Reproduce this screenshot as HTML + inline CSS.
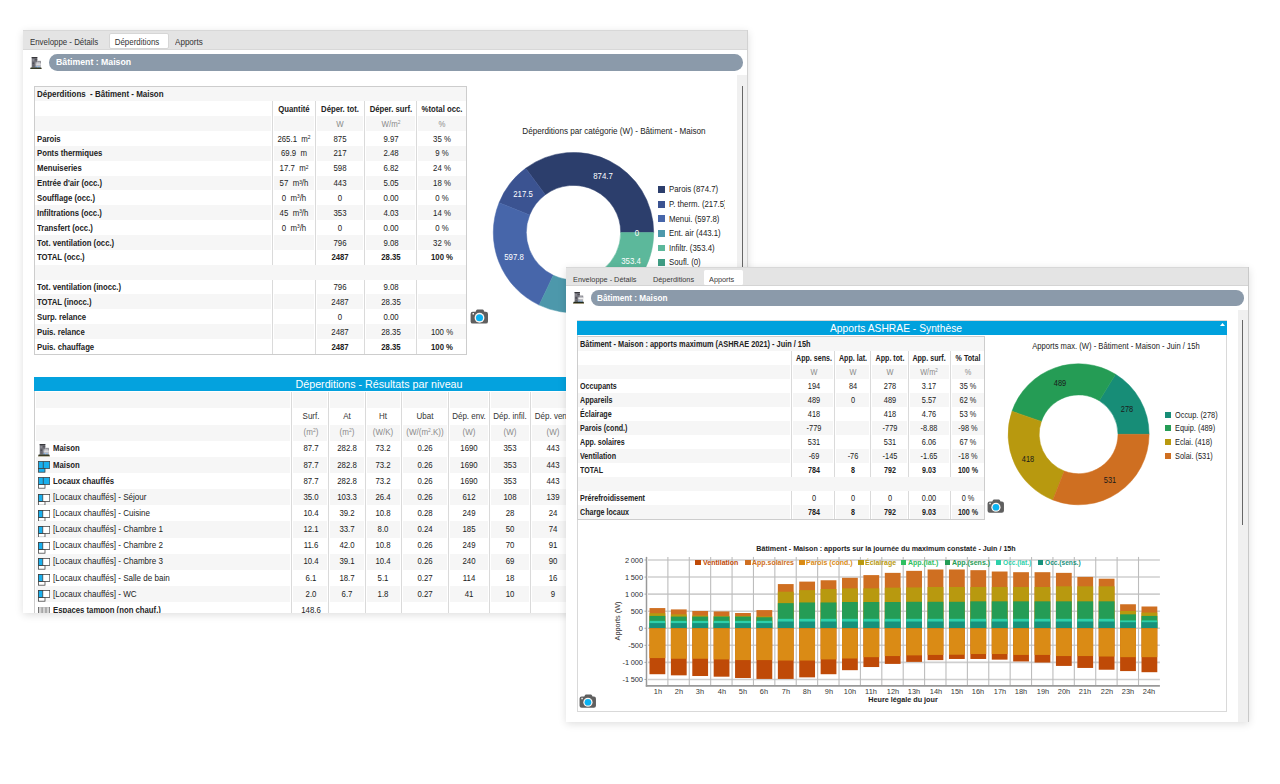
<!DOCTYPE html>
<html lang="fr"><head><meta charset="utf-8"><title>Déperditions / Apports</title>
<style>
html,body{margin:0;padding:0;background:#fff}
body{width:1280px;height:784px;position:relative;overflow:hidden;font-family:"Liberation Sans",sans-serif}
.win{position:absolute;background:#fff;overflow:hidden}
.win div,.win span,.win svg{position:absolute;display:block}
.win span{white-space:nowrap}
sup{font-size:62%;line-height:0;vertical-align:baseline;position:relative;top:-0.5em}
</style></head>
<body>
<div class="win" style="left:23.00px;top:30.00px;width:725.00px;height:583.00px;box-shadow:0 2px 8px rgba(0,0,0,0.13)">
<div style="left:0.00px;top:0.00px;width:725.00px;height:19.90px;background:#e4e4e4;border-bottom:1.3px solid #d8d8d8;border-top:1px solid #d8d8d8;box-sizing:border-box;"></div>
<div style="left:86.40px;top:2.90px;width:59.50px;height:16.30px;background:#fff;border:1px solid #d6d6d6;border-radius:2px;box-sizing:border-box;"></div>
<span style="left:7.00px;top:5.80px;width:400px;text-align:left;font-size:8.6px;line-height:12px;color:#333;transform:scaleX(0.915);transform-origin:left center;">Enveloppe - Détails</span>
<span style="left:-85.70px;top:5.80px;width:400px;text-align:center;font-size:8.6px;line-height:12px;color:#333;transform:scaleX(0.925);transform-origin:center center;">Déperditions</span>
<span style="left:152.00px;top:5.80px;width:400px;text-align:left;font-size:8.6px;line-height:12px;color:#333;transform:scaleX(0.94);transform-origin:left center;">Apports</span>
<svg style="left:7.10px;top:26.50px" width="11.90" height="12.30" viewBox="0 0 11.9 12.3"><rect x="1.7" y="0" width="5.6" height="10.7" fill="#74747c"/><rect x="1.7" y="0" width="5.6" height="1.2" fill="#37373b"/><rect x="2.5" y="2.3" width="1.6" height="1.4" fill="#94949c"/><rect x="4.9" y="2.3" width="2.4" height="1" fill="#4a4a50"/><rect x="2.5" y="5.4" width="1.7" height="1.9" fill="#4e4e56"/><rect x="2.5" y="8.3" width="1.7" height="1.2" fill="#5c5c64"/><rect x="7.3" y="3.9" width="3.5" height="6.8" fill="#b0b0b6"/><rect x="7.3" y="3.9" width="3.5" height="0.9" fill="#909096"/><rect x="5.6" y="6.4" width="5.0" height="1.4" fill="#f0f0f0"/><rect x="10" y="4.8" width="0.8" height="1.5" fill="#6a6a70"/><rect x="5.6" y="5.3" width="5.0" height="1.1" fill="#c2c2c8"/><rect x="5.6" y="7.8" width="5.0" height="1.4" fill="#bcbcc2"/><rect x="5.5" y="9.2" width="1.5" height="1.4" fill="#8cbcf0"/><rect x="8" y="9.2" width="1.7" height="1.4" fill="#8cbcf0"/><path d="M0 12.3 L0.7 10.5 L11.2 10.5 L11.9 12.3 Z" fill="#222a1a"/><rect x="0" y="11.85" width="11.9" height="0.45" fill="#b09662"/></svg>
<div style="left:26.30px;top:24.30px;width:693.70px;height:16.50px;background:#8b9aaa;border-radius:8.3px;"></div>
<span style="left:32.60px;top:26.40px;width:400px;text-align:left;font-size:9.8px;line-height:12px;color:#fff;transform:scaleX(0.89);transform-origin:left center;font-weight:bold;">Bâtiment : Maison</span>
<div style="left:714.30px;top:45.20px;width:10.70px;height:537.80px;background:#f0f0f0;"></div>
<div style="left:724.20px;top:0.00px;width:0.80px;height:583.00px;background:#d2d2d2;"></div>
<div style="left:718.60px;top:56.00px;width:1.30px;height:527.00px;background:#666;"></div>
<div style="left:12.00px;top:56.40px;width:430.70px;height:14.86px;background:#f6f6f6;"></div>
<div style="left:12.00px;top:86.12px;width:430.70px;height:14.86px;background:#f6f6f6;"></div>
<div style="left:12.00px;top:115.84px;width:430.70px;height:14.86px;background:#f6f6f6;"></div>
<div style="left:12.00px;top:145.56px;width:430.70px;height:14.86px;background:#f6f6f6;"></div>
<div style="left:12.00px;top:175.28px;width:430.70px;height:14.86px;background:#f6f6f6;"></div>
<div style="left:12.00px;top:205.00px;width:430.70px;height:14.86px;background:#f6f6f6;"></div>
<div style="left:12.00px;top:234.72px;width:430.70px;height:14.86px;background:#f6f6f6;"></div>
<div style="left:12.00px;top:264.44px;width:430.70px;height:14.86px;background:#f6f6f6;"></div>
<div style="left:12.00px;top:294.16px;width:430.70px;height:14.86px;background:#f6f6f6;"></div>
<div style="left:248.10px;top:71.26px;width:3.00px;height:252.62px;background:#fff;"></div>
<div style="left:249.10px;top:71.26px;width:1.00px;height:252.62px;background:#dadada;"></div>
<div style="left:290.50px;top:71.26px;width:3.00px;height:252.62px;background:#fff;"></div>
<div style="left:291.50px;top:71.26px;width:1.00px;height:252.62px;background:#dadada;"></div>
<div style="left:339.90px;top:71.26px;width:3.00px;height:252.62px;background:#fff;"></div>
<div style="left:340.90px;top:71.26px;width:1.00px;height:252.62px;background:#dadada;"></div>
<div style="left:392.40px;top:71.26px;width:3.00px;height:252.62px;background:#fff;"></div>
<div style="left:393.40px;top:71.26px;width:1.00px;height:252.62px;background:#dadada;"></div>
<div style="left:12.00px;top:234.72px;width:430.70px;height:14.86px;background:#f6f6f6;"></div>
<div style="left:10.50px;top:55.90px;width:433.70px;height:268.68px;background:transparent;border:1px solid #cdcdcd;box-sizing:border-box;"></div>
<span style="left:13.90px;top:58.03px;width:400px;text-align:left;font-size:8.6px;line-height:12px;color:#222;transform:scaleX(0.927);transform-origin:left center;font-weight:bold;white-space:pre;">Déperditions  - Bâtiment - Maison</span>
<span style="left:71.30px;top:72.89px;width:400px;text-align:center;font-size:8.6px;line-height:12px;color:#222;transform:scaleX(0.9);transform-origin:center center;font-weight:bold;">Quantité</span>
<span style="left:116.80px;top:72.89px;width:400px;text-align:center;font-size:8.6px;line-height:12px;color:#222;transform:scaleX(0.9);transform-origin:center center;font-weight:bold;">Déper. tot.</span>
<span style="left:168.00px;top:72.89px;width:400px;text-align:center;font-size:8.6px;line-height:12px;color:#222;transform:scaleX(0.9);transform-origin:center center;font-weight:bold;">Déper. surf.</span>
<span style="left:219.00px;top:72.89px;width:400px;text-align:center;font-size:8.6px;line-height:12px;color:#222;transform:scaleX(0.9);transform-origin:center center;font-weight:bold;">%total occ.</span>
<span style="left:116.80px;top:87.75px;width:400px;text-align:center;font-size:8.6px;line-height:12px;color:#8a8a8a;transform:scaleX(0.91);transform-origin:center center;">W</span>
<span style="left:168.00px;top:87.75px;width:400px;text-align:center;font-size:8.6px;line-height:12px;color:#8a8a8a;transform:scaleX(0.91);transform-origin:center center;">W/m<sup>2</sup></span>
<span style="left:219.00px;top:87.75px;width:400px;text-align:center;font-size:8.6px;line-height:12px;color:#8a8a8a;transform:scaleX(0.91);transform-origin:center center;">%</span>
<span style="left:13.90px;top:102.61px;width:400px;text-align:left;font-size:8.6px;line-height:12px;color:#222;transform:scaleX(0.9);transform-origin:left center;font-weight:bold;">Parois</span>
<span style="left:71.30px;top:102.61px;width:400px;text-align:center;font-size:8.6px;line-height:12px;color:#222;transform:scaleX(0.91);transform-origin:center center;white-space:pre;">265.1  m<sup>2</sup></span>
<span style="left:116.80px;top:102.61px;width:400px;text-align:center;font-size:8.6px;line-height:12px;color:#222;transform:scaleX(0.91);transform-origin:center center;white-space:pre;">875</span>
<span style="left:168.00px;top:102.61px;width:400px;text-align:center;font-size:8.6px;line-height:12px;color:#222;transform:scaleX(0.91);transform-origin:center center;white-space:pre;">9.97</span>
<span style="left:219.00px;top:102.61px;width:400px;text-align:center;font-size:8.6px;line-height:12px;color:#222;transform:scaleX(0.91);transform-origin:center center;white-space:pre;">35 %</span>
<span style="left:13.90px;top:117.47px;width:400px;text-align:left;font-size:8.6px;line-height:12px;color:#222;transform:scaleX(0.9);transform-origin:left center;font-weight:bold;">Ponts thermiques</span>
<span style="left:71.30px;top:117.47px;width:400px;text-align:center;font-size:8.6px;line-height:12px;color:#222;transform:scaleX(0.91);transform-origin:center center;white-space:pre;">69.9  m</span>
<span style="left:116.80px;top:117.47px;width:400px;text-align:center;font-size:8.6px;line-height:12px;color:#222;transform:scaleX(0.91);transform-origin:center center;white-space:pre;">217</span>
<span style="left:168.00px;top:117.47px;width:400px;text-align:center;font-size:8.6px;line-height:12px;color:#222;transform:scaleX(0.91);transform-origin:center center;white-space:pre;">2.48</span>
<span style="left:219.00px;top:117.47px;width:400px;text-align:center;font-size:8.6px;line-height:12px;color:#222;transform:scaleX(0.91);transform-origin:center center;white-space:pre;">9 %</span>
<span style="left:13.90px;top:132.33px;width:400px;text-align:left;font-size:8.6px;line-height:12px;color:#222;transform:scaleX(0.9);transform-origin:left center;font-weight:bold;">Menuiseries</span>
<span style="left:71.30px;top:132.33px;width:400px;text-align:center;font-size:8.6px;line-height:12px;color:#222;transform:scaleX(0.91);transform-origin:center center;white-space:pre;">17.7  m<sup>2</sup></span>
<span style="left:116.80px;top:132.33px;width:400px;text-align:center;font-size:8.6px;line-height:12px;color:#222;transform:scaleX(0.91);transform-origin:center center;white-space:pre;">598</span>
<span style="left:168.00px;top:132.33px;width:400px;text-align:center;font-size:8.6px;line-height:12px;color:#222;transform:scaleX(0.91);transform-origin:center center;white-space:pre;">6.82</span>
<span style="left:219.00px;top:132.33px;width:400px;text-align:center;font-size:8.6px;line-height:12px;color:#222;transform:scaleX(0.91);transform-origin:center center;white-space:pre;">24 %</span>
<span style="left:13.90px;top:147.19px;width:400px;text-align:left;font-size:8.6px;line-height:12px;color:#222;transform:scaleX(0.9);transform-origin:left center;font-weight:bold;">Entrée d'air (occ.)</span>
<span style="left:71.30px;top:147.19px;width:400px;text-align:center;font-size:8.6px;line-height:12px;color:#222;transform:scaleX(0.91);transform-origin:center center;white-space:pre;">57  m<sup>3</sup>/h</span>
<span style="left:116.80px;top:147.19px;width:400px;text-align:center;font-size:8.6px;line-height:12px;color:#222;transform:scaleX(0.91);transform-origin:center center;white-space:pre;">443</span>
<span style="left:168.00px;top:147.19px;width:400px;text-align:center;font-size:8.6px;line-height:12px;color:#222;transform:scaleX(0.91);transform-origin:center center;white-space:pre;">5.05</span>
<span style="left:219.00px;top:147.19px;width:400px;text-align:center;font-size:8.6px;line-height:12px;color:#222;transform:scaleX(0.91);transform-origin:center center;white-space:pre;">18 %</span>
<span style="left:13.90px;top:162.05px;width:400px;text-align:left;font-size:8.6px;line-height:12px;color:#222;transform:scaleX(0.9);transform-origin:left center;font-weight:bold;">Soufflage (occ.)</span>
<span style="left:71.30px;top:162.05px;width:400px;text-align:center;font-size:8.6px;line-height:12px;color:#222;transform:scaleX(0.91);transform-origin:center center;white-space:pre;">0  m<sup>3</sup>/h</span>
<span style="left:116.80px;top:162.05px;width:400px;text-align:center;font-size:8.6px;line-height:12px;color:#222;transform:scaleX(0.91);transform-origin:center center;white-space:pre;">0</span>
<span style="left:168.00px;top:162.05px;width:400px;text-align:center;font-size:8.6px;line-height:12px;color:#222;transform:scaleX(0.91);transform-origin:center center;white-space:pre;">0.00</span>
<span style="left:219.00px;top:162.05px;width:400px;text-align:center;font-size:8.6px;line-height:12px;color:#222;transform:scaleX(0.91);transform-origin:center center;white-space:pre;">0 %</span>
<span style="left:13.90px;top:176.91px;width:400px;text-align:left;font-size:8.6px;line-height:12px;color:#222;transform:scaleX(0.9);transform-origin:left center;font-weight:bold;">Infiltrations (occ.)</span>
<span style="left:71.30px;top:176.91px;width:400px;text-align:center;font-size:8.6px;line-height:12px;color:#222;transform:scaleX(0.91);transform-origin:center center;white-space:pre;">45  m<sup>3</sup>/h</span>
<span style="left:116.80px;top:176.91px;width:400px;text-align:center;font-size:8.6px;line-height:12px;color:#222;transform:scaleX(0.91);transform-origin:center center;white-space:pre;">353</span>
<span style="left:168.00px;top:176.91px;width:400px;text-align:center;font-size:8.6px;line-height:12px;color:#222;transform:scaleX(0.91);transform-origin:center center;white-space:pre;">4.03</span>
<span style="left:219.00px;top:176.91px;width:400px;text-align:center;font-size:8.6px;line-height:12px;color:#222;transform:scaleX(0.91);transform-origin:center center;white-space:pre;">14 %</span>
<span style="left:13.90px;top:191.77px;width:400px;text-align:left;font-size:8.6px;line-height:12px;color:#222;transform:scaleX(0.9);transform-origin:left center;font-weight:bold;">Transfert (occ.)</span>
<span style="left:71.30px;top:191.77px;width:400px;text-align:center;font-size:8.6px;line-height:12px;color:#222;transform:scaleX(0.91);transform-origin:center center;white-space:pre;">0  m<sup>3</sup>/h</span>
<span style="left:116.80px;top:191.77px;width:400px;text-align:center;font-size:8.6px;line-height:12px;color:#222;transform:scaleX(0.91);transform-origin:center center;white-space:pre;">0</span>
<span style="left:168.00px;top:191.77px;width:400px;text-align:center;font-size:8.6px;line-height:12px;color:#222;transform:scaleX(0.91);transform-origin:center center;white-space:pre;">0.00</span>
<span style="left:219.00px;top:191.77px;width:400px;text-align:center;font-size:8.6px;line-height:12px;color:#222;transform:scaleX(0.91);transform-origin:center center;white-space:pre;">0 %</span>
<span style="left:13.90px;top:206.63px;width:400px;text-align:left;font-size:8.6px;line-height:12px;color:#222;transform:scaleX(0.9);transform-origin:left center;font-weight:bold;">Tot. ventilation (occ.)</span>
<span style="left:116.80px;top:206.63px;width:400px;text-align:center;font-size:8.6px;line-height:12px;color:#222;transform:scaleX(0.91);transform-origin:center center;white-space:pre;">796</span>
<span style="left:168.00px;top:206.63px;width:400px;text-align:center;font-size:8.6px;line-height:12px;color:#222;transform:scaleX(0.91);transform-origin:center center;white-space:pre;">9.08</span>
<span style="left:219.00px;top:206.63px;width:400px;text-align:center;font-size:8.6px;line-height:12px;color:#222;transform:scaleX(0.91);transform-origin:center center;white-space:pre;">32 %</span>
<span style="left:13.90px;top:221.49px;width:400px;text-align:left;font-size:8.6px;line-height:12px;color:#222;transform:scaleX(0.9);transform-origin:left center;font-weight:bold;">TOTAL (occ.)</span>
<span style="left:116.80px;top:221.49px;width:400px;text-align:center;font-size:8.6px;line-height:12px;color:#222;transform:scaleX(0.9);transform-origin:center center;font-weight:bold;white-space:pre;">2487</span>
<span style="left:168.00px;top:221.49px;width:400px;text-align:center;font-size:8.6px;line-height:12px;color:#222;transform:scaleX(0.9);transform-origin:center center;font-weight:bold;white-space:pre;">28.35</span>
<span style="left:219.00px;top:221.49px;width:400px;text-align:center;font-size:8.6px;line-height:12px;color:#222;transform:scaleX(0.9);transform-origin:center center;font-weight:bold;white-space:pre;">100 %</span>
<span style="left:13.90px;top:251.21px;width:400px;text-align:left;font-size:8.6px;line-height:12px;color:#222;transform:scaleX(0.9);transform-origin:left center;font-weight:bold;">Tot. ventilation (inocc.)</span>
<span style="left:116.80px;top:251.21px;width:400px;text-align:center;font-size:8.6px;line-height:12px;color:#222;transform:scaleX(0.91);transform-origin:center center;white-space:pre;">796</span>
<span style="left:168.00px;top:251.21px;width:400px;text-align:center;font-size:8.6px;line-height:12px;color:#222;transform:scaleX(0.91);transform-origin:center center;white-space:pre;">9.08</span>
<span style="left:13.90px;top:266.07px;width:400px;text-align:left;font-size:8.6px;line-height:12px;color:#222;transform:scaleX(0.9);transform-origin:left center;font-weight:bold;">TOTAL (inocc.)</span>
<span style="left:116.80px;top:266.07px;width:400px;text-align:center;font-size:8.6px;line-height:12px;color:#222;transform:scaleX(0.91);transform-origin:center center;white-space:pre;">2487</span>
<span style="left:168.00px;top:266.07px;width:400px;text-align:center;font-size:8.6px;line-height:12px;color:#222;transform:scaleX(0.91);transform-origin:center center;white-space:pre;">28.35</span>
<span style="left:13.90px;top:280.93px;width:400px;text-align:left;font-size:8.6px;line-height:12px;color:#222;transform:scaleX(0.9);transform-origin:left center;font-weight:bold;">Surp. relance</span>
<span style="left:116.80px;top:280.93px;width:400px;text-align:center;font-size:8.6px;line-height:12px;color:#222;transform:scaleX(0.91);transform-origin:center center;white-space:pre;">0</span>
<span style="left:168.00px;top:280.93px;width:400px;text-align:center;font-size:8.6px;line-height:12px;color:#222;transform:scaleX(0.91);transform-origin:center center;white-space:pre;">0.00</span>
<span style="left:13.90px;top:295.79px;width:400px;text-align:left;font-size:8.6px;line-height:12px;color:#222;transform:scaleX(0.9);transform-origin:left center;font-weight:bold;">Puis. relance</span>
<span style="left:116.80px;top:295.79px;width:400px;text-align:center;font-size:8.6px;line-height:12px;color:#222;transform:scaleX(0.91);transform-origin:center center;white-space:pre;">2487</span>
<span style="left:168.00px;top:295.79px;width:400px;text-align:center;font-size:8.6px;line-height:12px;color:#222;transform:scaleX(0.91);transform-origin:center center;white-space:pre;">28.35</span>
<span style="left:219.00px;top:295.79px;width:400px;text-align:center;font-size:8.6px;line-height:12px;color:#222;transform:scaleX(0.91);transform-origin:center center;white-space:pre;">100 %</span>
<span style="left:13.90px;top:310.65px;width:400px;text-align:left;font-size:8.6px;line-height:12px;color:#222;transform:scaleX(0.9);transform-origin:left center;font-weight:bold;">Puis. chauffage</span>
<span style="left:116.80px;top:310.65px;width:400px;text-align:center;font-size:8.6px;line-height:12px;color:#222;transform:scaleX(0.9);transform-origin:center center;font-weight:bold;white-space:pre;">2487</span>
<span style="left:168.00px;top:310.65px;width:400px;text-align:center;font-size:8.6px;line-height:12px;color:#222;transform:scaleX(0.9);transform-origin:center center;font-weight:bold;white-space:pre;">28.35</span>
<span style="left:219.00px;top:310.65px;width:400px;text-align:center;font-size:8.6px;line-height:12px;color:#222;transform:scaleX(0.9);transform-origin:center center;font-weight:bold;white-space:pre;">100 %</span>
<span style="left:390.50px;top:95.30px;width:400px;text-align:center;font-size:8.6px;line-height:12px;color:#222;transform:scaleX(0.945);transform-origin:center center;">Déperditions par catégorie (W) - Bâtiment - Maison</span>
<svg style="left:0;top:0" width="725" height="583"><path d="M630.70 202.60A80.2 80.2 0 0 0 502.64 138.25L522.33 164.73A47.2 47.2 0 0 1 597.70 202.60Z" fill="#2c3e6c" stroke="#2c3e6c" stroke-width="0.5" stroke-linejoin="round"/><path d="M502.64 138.25A80.2 80.2 0 0 0 476.07 172.73L506.70 185.02A47.2 47.2 0 0 1 522.33 164.73Z" fill="#3b5391" stroke="#3b5391" stroke-width="0.5" stroke-linejoin="round"/><path d="M476.07 172.73A80.2 80.2 0 0 0 516.20 275.10L530.31 245.27A47.2 47.2 0 0 1 506.70 185.02Z" fill="#4766aa" stroke="#4766aa" stroke-width="0.5" stroke-linejoin="round"/><path d="M516.20 275.10A80.2 80.2 0 0 0 600.79 265.07L580.10 239.37A47.2 47.2 0 0 1 530.31 245.27Z" fill="#4d98ab" stroke="#4d98ab" stroke-width="0.5" stroke-linejoin="round"/><path d="M600.79 265.07A80.2 80.2 0 0 0 630.70 202.60L597.70 202.60A47.2 47.2 0 0 1 580.10 239.37Z" fill="#5cb89b" stroke="#5cb89b" stroke-width="0.5" stroke-linejoin="round"/></svg>
<span style="left:379.60px;top:140.00px;width:400px;text-align:center;font-size:8.6px;line-height:12px;color:#fff;transform:scaleX(0.91);transform-origin:center center;">874.7</span>
<span style="left:299.90px;top:157.60px;width:400px;text-align:center;font-size:8.6px;line-height:12px;color:#fff;transform:scaleX(0.91);transform-origin:center center;">217.5</span>
<span style="left:291.20px;top:220.50px;width:400px;text-align:center;font-size:8.6px;line-height:12px;color:#fff;transform:scaleX(0.91);transform-origin:center center;">597.8</span>
<span style="left:414.40px;top:196.80px;width:400px;text-align:center;font-size:8.6px;line-height:12px;color:#fff;transform:scaleX(0.91);transform-origin:center center;">0</span>
<span style="left:408.20px;top:224.70px;width:400px;text-align:center;font-size:8.6px;line-height:12px;color:#fff;transform:scaleX(0.91);transform-origin:center center;">353.4</span>
<span style="left:358.50px;top:260.50px;width:400px;text-align:center;font-size:8.6px;line-height:12px;color:#fff;transform:scaleX(0.91);transform-origin:center center;">443.1</span>
<div style="left:632px;top:150px;width:69.9px;height:100px;overflow:hidden">
<div style="left:3.10px;top:6.30px;width:6.7px;height:6.7px;background:#2c3e6c"></div>
<span style="left:14.10px;top:3.40px;font-size:8.6px;line-height:12px;color:#222;transform:scaleX(0.91);transform-origin:left center;white-space:nowrap">Parois (874.7)</span>
<div style="left:3.10px;top:20.85px;width:6.7px;height:6.7px;background:#3b5391"></div>
<span style="left:14.10px;top:17.95px;font-size:8.6px;line-height:12px;color:#222;transform:scaleX(0.91);transform-origin:left center;white-space:nowrap">P. therm. (217.5)</span>
<div style="left:3.10px;top:35.40px;width:6.7px;height:6.7px;background:#4766aa"></div>
<span style="left:14.10px;top:32.50px;font-size:8.6px;line-height:12px;color:#222;transform:scaleX(0.91);transform-origin:left center;white-space:nowrap">Menui. (597.8)</span>
<div style="left:3.10px;top:49.95px;width:6.7px;height:6.7px;background:#4d98ab"></div>
<span style="left:14.10px;top:47.05px;font-size:8.6px;line-height:12px;color:#222;transform:scaleX(0.91);transform-origin:left center;white-space:nowrap">Ent. air (443.1)</span>
<div style="left:3.10px;top:64.50px;width:6.7px;height:6.7px;background:#5cb89b"></div>
<span style="left:14.10px;top:61.60px;font-size:8.6px;line-height:12px;color:#222;transform:scaleX(0.91);transform-origin:left center;white-space:nowrap">Infiltr. (353.4)</span>
<div style="left:3.10px;top:79.05px;width:6.7px;height:6.7px;background:#3f9d84"></div>
<span style="left:14.10px;top:76.15px;font-size:8.6px;line-height:12px;color:#222;transform:scaleX(0.91);transform-origin:left center;white-space:nowrap">Soufl. (0)</span>
</div>
<svg style="left:446.60px;top:278.80px" width="18.60" height="15.20" viewBox="-0.6 -0.6 18.6 15.2"><path d="M5.0 2.1 L5.7 0.7 Q6 0 6.8 0 L12 0 Q12.8 0 13.1 0.7 L13.8 2.1 L15.2 2.1 Q17.4 2.1 17.4 4.3 L17.4 11.8 Q17.4 14 15.2 14 L2.2 14 Q0 14 0 11.8 L0 4.3 Q0 2.1 2.2 2.1 Z" fill="#5f5f5f"/><rect x="1.9" y="3.4" width="1.5" height="1.5" rx="0.3" fill="#fff"/><circle cx="8.9" cy="8.15" r="4.9" fill="#fdf6f2"/><circle cx="8.9" cy="8.15" r="3.55" fill="#0ab2f2"/></svg>
<div style="left:11.40px;top:346.70px;width:689.60px;height:14.00px;background:#04a2de;"></div>
<span style="left:156.20px;top:346.60px;width:400px;text-align:center;font-size:11.6px;line-height:14px;color:#fff;transform:scaleX(0.922);transform-origin:center center;">Déperditions - Résultats par niveau</span>
<div style="left:12.50px;top:362.20px;width:688.50px;height:16.15px;background:#f6f6f6;"></div>
<div style="left:12.50px;top:394.50px;width:688.50px;height:16.15px;background:#f6f6f6;"></div>
<div style="left:12.50px;top:426.80px;width:688.50px;height:16.15px;background:#f6f6f6;"></div>
<div style="left:12.50px;top:459.10px;width:688.50px;height:16.15px;background:#f6f6f6;"></div>
<div style="left:12.50px;top:491.40px;width:688.50px;height:16.15px;background:#f6f6f6;"></div>
<div style="left:12.50px;top:523.70px;width:688.50px;height:16.15px;background:#f6f6f6;"></div>
<div style="left:12.50px;top:556.00px;width:688.50px;height:16.15px;background:#f6f6f6;"></div>
<div style="left:267.00px;top:362.20px;width:3.40px;height:227.80px;background:#fff;"></div>
<div style="left:268.20px;top:362.20px;width:1.00px;height:227.80px;background:#dadada;"></div>
<div style="left:304.10px;top:362.20px;width:3.40px;height:227.80px;background:#fff;"></div>
<div style="left:305.30px;top:362.20px;width:1.00px;height:227.80px;background:#dadada;"></div>
<div style="left:340.50px;top:362.20px;width:3.40px;height:227.80px;background:#fff;"></div>
<div style="left:341.70px;top:362.20px;width:1.00px;height:227.80px;background:#dadada;"></div>
<div style="left:377.10px;top:362.20px;width:3.40px;height:227.80px;background:#fff;"></div>
<div style="left:378.30px;top:362.20px;width:1.00px;height:227.80px;background:#dadada;"></div>
<div style="left:424.10px;top:362.20px;width:3.40px;height:227.80px;background:#fff;"></div>
<div style="left:425.30px;top:362.20px;width:1.00px;height:227.80px;background:#dadada;"></div>
<div style="left:464.80px;top:362.20px;width:3.40px;height:227.80px;background:#fff;"></div>
<div style="left:466.00px;top:362.20px;width:1.00px;height:227.80px;background:#dadada;"></div>
<div style="left:506.10px;top:362.20px;width:3.40px;height:227.80px;background:#fff;"></div>
<div style="left:507.30px;top:362.20px;width:1.00px;height:227.80px;background:#dadada;"></div>
<div style="left:549.30px;top:362.20px;width:3.40px;height:227.80px;background:#fff;"></div>
<div style="left:550.50px;top:362.20px;width:1.00px;height:227.80px;background:#dadada;"></div>
<div style="left:590.30px;top:362.20px;width:3.40px;height:227.80px;background:#fff;"></div>
<div style="left:591.50px;top:362.20px;width:1.00px;height:227.80px;background:#dadada;"></div>
<div style="left:631.30px;top:362.20px;width:3.40px;height:227.80px;background:#fff;"></div>
<div style="left:632.50px;top:362.20px;width:1.00px;height:227.80px;background:#dadada;"></div>
<div style="left:672.30px;top:362.20px;width:3.40px;height:227.80px;background:#fff;"></div>
<div style="left:673.50px;top:362.20px;width:1.00px;height:227.80px;background:#dadada;"></div>
<div style="left:11.20px;top:360.70px;width:1.00px;height:229.30px;background:#cdcdcd;"></div>
<span style="left:87.50px;top:379.93px;width:400px;text-align:center;font-size:8.6px;line-height:12px;color:#333;transform:scaleX(0.93);transform-origin:center center;">Surf.</span>
<span style="left:87.50px;top:395.77px;width:400px;text-align:center;font-size:8.6px;line-height:12px;color:#8a8a8a;transform:scaleX(0.93);transform-origin:center center;">(m<sup>2</sup>)</span>
<span style="left:123.90px;top:379.93px;width:400px;text-align:center;font-size:8.6px;line-height:12px;color:#333;transform:scaleX(0.93);transform-origin:center center;">At</span>
<span style="left:123.90px;top:395.77px;width:400px;text-align:center;font-size:8.6px;line-height:12px;color:#8a8a8a;transform:scaleX(0.93);transform-origin:center center;">(m<sup>2</sup>)</span>
<span style="left:160.40px;top:379.93px;width:400px;text-align:center;font-size:8.6px;line-height:12px;color:#333;transform:scaleX(0.93);transform-origin:center center;">Ht</span>
<span style="left:160.40px;top:395.77px;width:400px;text-align:center;font-size:8.6px;line-height:12px;color:#8a8a8a;transform:scaleX(0.93);transform-origin:center center;">(W/K)</span>
<span style="left:202.20px;top:379.93px;width:400px;text-align:center;font-size:8.6px;line-height:12px;color:#333;transform:scaleX(0.93);transform-origin:center center;">Ubat</span>
<span style="left:202.20px;top:395.77px;width:400px;text-align:center;font-size:8.6px;line-height:12px;color:#8a8a8a;transform:scaleX(0.93);transform-origin:center center;">(W/(m<sup>2</sup>.K))</span>
<span style="left:245.90px;top:379.93px;width:400px;text-align:center;font-size:8.6px;line-height:12px;color:#333;transform:scaleX(0.93);transform-origin:center center;">Dép. env.</span>
<span style="left:245.90px;top:395.77px;width:400px;text-align:center;font-size:8.6px;line-height:12px;color:#8a8a8a;transform:scaleX(0.93);transform-origin:center center;">(W)</span>
<span style="left:287.00px;top:379.93px;width:400px;text-align:center;font-size:8.6px;line-height:12px;color:#333;transform:scaleX(0.93);transform-origin:center center;">Dép. infil.</span>
<span style="left:287.00px;top:395.77px;width:400px;text-align:center;font-size:8.6px;line-height:12px;color:#8a8a8a;transform:scaleX(0.93);transform-origin:center center;">(W)</span>
<span style="left:329.50px;top:379.93px;width:400px;text-align:center;font-size:8.6px;line-height:12px;color:#333;transform:scaleX(0.93);transform-origin:center center;">Dép. vent.</span>
<span style="left:329.50px;top:395.77px;width:400px;text-align:center;font-size:8.6px;line-height:12px;color:#8a8a8a;transform:scaleX(0.93);transform-origin:center center;">(W)</span>
<span style="left:371.50px;top:379.93px;width:400px;text-align:center;font-size:8.6px;line-height:12px;color:#333;transform:scaleX(0.93);transform-origin:center center;">Dép. tot.</span>
<span style="left:371.50px;top:395.77px;width:400px;text-align:center;font-size:8.6px;line-height:12px;color:#8a8a8a;transform:scaleX(0.93);transform-origin:center center;">(W)</span>
<span style="left:412.50px;top:379.93px;width:400px;text-align:center;font-size:8.6px;line-height:12px;color:#333;transform:scaleX(0.93);transform-origin:center center;">Puis.</span>
<span style="left:412.50px;top:395.77px;width:400px;text-align:center;font-size:8.6px;line-height:12px;color:#8a8a8a;transform:scaleX(0.93);transform-origin:center center;">(W)</span>
<span style="left:453.50px;top:379.93px;width:400px;text-align:center;font-size:8.6px;line-height:12px;color:#333;transform:scaleX(0.93);transform-origin:center center;">Ratio</span>
<span style="left:453.50px;top:395.77px;width:400px;text-align:center;font-size:8.6px;line-height:12px;color:#8a8a8a;transform:scaleX(0.93);transform-origin:center center;">(W/m<sup>2</sup>)</span>
<svg style="left:14.90px;top:414.42px" width="11.90" height="12.30" viewBox="0 0 11.9 12.3"><rect x="1.7" y="0" width="5.6" height="10.7" fill="#74747c"/><rect x="1.7" y="0" width="5.6" height="1.2" fill="#37373b"/><rect x="2.5" y="2.3" width="1.6" height="1.4" fill="#94949c"/><rect x="4.9" y="2.3" width="2.4" height="1" fill="#4a4a50"/><rect x="2.5" y="5.4" width="1.7" height="1.9" fill="#4e4e56"/><rect x="2.5" y="8.3" width="1.7" height="1.2" fill="#5c5c64"/><rect x="7.3" y="3.9" width="3.5" height="6.8" fill="#b0b0b6"/><rect x="7.3" y="3.9" width="3.5" height="0.9" fill="#909096"/><rect x="5.6" y="6.4" width="5.0" height="1.4" fill="#f0f0f0"/><rect x="10" y="4.8" width="0.8" height="1.5" fill="#6a6a70"/><rect x="5.6" y="5.3" width="5.0" height="1.1" fill="#c2c2c8"/><rect x="5.6" y="7.8" width="5.0" height="1.4" fill="#bcbcc2"/><rect x="5.5" y="9.2" width="1.5" height="1.4" fill="#8cbcf0"/><rect x="8" y="9.2" width="1.7" height="1.4" fill="#8cbcf0"/><path d="M0 12.3 L0.7 10.5 L11.2 10.5 L11.9 12.3 Z" fill="#222a1a"/><rect x="0" y="11.85" width="11.9" height="0.45" fill="#b09662"/></svg>
<span style="left:30.00px;top:412.42px;width:400px;text-align:left;font-size:8.6px;line-height:12px;color:#222;transform:scaleX(0.9);transform-origin:left center;font-weight:bold;">Maison</span>
<span style="left:87.50px;top:412.42px;width:400px;text-align:center;font-size:8.6px;line-height:12px;color:#222;transform:scaleX(0.91);transform-origin:center center;">87.7</span>
<span style="left:123.90px;top:412.42px;width:400px;text-align:center;font-size:8.6px;line-height:12px;color:#222;transform:scaleX(0.91);transform-origin:center center;">282.8</span>
<span style="left:160.40px;top:412.42px;width:400px;text-align:center;font-size:8.6px;line-height:12px;color:#222;transform:scaleX(0.91);transform-origin:center center;">73.2</span>
<span style="left:202.20px;top:412.42px;width:400px;text-align:center;font-size:8.6px;line-height:12px;color:#222;transform:scaleX(0.91);transform-origin:center center;">0.26</span>
<span style="left:245.90px;top:412.42px;width:400px;text-align:center;font-size:8.6px;line-height:12px;color:#222;transform:scaleX(0.91);transform-origin:center center;">1690</span>
<span style="left:287.00px;top:412.42px;width:400px;text-align:center;font-size:8.6px;line-height:12px;color:#222;transform:scaleX(0.91);transform-origin:center center;">353</span>
<span style="left:329.50px;top:412.42px;width:400px;text-align:center;font-size:8.6px;line-height:12px;color:#222;transform:scaleX(0.91);transform-origin:center center;">443</span>
<span style="left:371.50px;top:412.42px;width:400px;text-align:center;font-size:8.6px;line-height:12px;color:#222;transform:scaleX(0.91);transform-origin:center center;">2487</span>
<span style="left:412.50px;top:412.42px;width:400px;text-align:center;font-size:8.6px;line-height:12px;color:#222;transform:scaleX(0.91);transform-origin:center center;">2487</span>
<span style="left:453.50px;top:412.42px;width:400px;text-align:center;font-size:8.6px;line-height:12px;color:#222;transform:scaleX(0.91);transform-origin:center center;">28.4</span>
<svg style="left:14.90px;top:431.27px" width="12.2" height="11.6" viewBox="0 0 12.2 11.6"><rect x="0.4" y="0.4" width="11.4" height="7" fill="#19b0ee" stroke="#3c3c3c" stroke-width="0.75"/><line x1="5.3" y1="0.4" x2="5.3" y2="7.4" stroke="#3c3c3c" stroke-width="0.75"/><rect x="0.4" y="7.4" width="6.6" height="3.8" fill="#19b0ee" stroke="#3c3c3c" stroke-width="0.75"/></svg>
<span style="left:30.00px;top:428.57px;width:400px;text-align:left;font-size:8.6px;line-height:12px;color:#222;transform:scaleX(0.9);transform-origin:left center;font-weight:bold;">Maison</span>
<span style="left:87.50px;top:428.57px;width:400px;text-align:center;font-size:8.6px;line-height:12px;color:#222;transform:scaleX(0.91);transform-origin:center center;">87.7</span>
<span style="left:123.90px;top:428.57px;width:400px;text-align:center;font-size:8.6px;line-height:12px;color:#222;transform:scaleX(0.91);transform-origin:center center;">282.8</span>
<span style="left:160.40px;top:428.57px;width:400px;text-align:center;font-size:8.6px;line-height:12px;color:#222;transform:scaleX(0.91);transform-origin:center center;">73.2</span>
<span style="left:202.20px;top:428.57px;width:400px;text-align:center;font-size:8.6px;line-height:12px;color:#222;transform:scaleX(0.91);transform-origin:center center;">0.26</span>
<span style="left:245.90px;top:428.57px;width:400px;text-align:center;font-size:8.6px;line-height:12px;color:#222;transform:scaleX(0.91);transform-origin:center center;">1690</span>
<span style="left:287.00px;top:428.57px;width:400px;text-align:center;font-size:8.6px;line-height:12px;color:#222;transform:scaleX(0.91);transform-origin:center center;">353</span>
<span style="left:329.50px;top:428.57px;width:400px;text-align:center;font-size:8.6px;line-height:12px;color:#222;transform:scaleX(0.91);transform-origin:center center;">443</span>
<span style="left:371.50px;top:428.57px;width:400px;text-align:center;font-size:8.6px;line-height:12px;color:#222;transform:scaleX(0.91);transform-origin:center center;">2487</span>
<span style="left:412.50px;top:428.57px;width:400px;text-align:center;font-size:8.6px;line-height:12px;color:#222;transform:scaleX(0.91);transform-origin:center center;">2487</span>
<span style="left:453.50px;top:428.57px;width:400px;text-align:center;font-size:8.6px;line-height:12px;color:#222;transform:scaleX(0.91);transform-origin:center center;">28.4</span>
<svg style="left:14.90px;top:447.42px" width="12.2" height="11.6" viewBox="0 0 12.2 11.6"><rect x="0.4" y="7.4" width="6.6" height="3.8" fill="#fff" stroke="#3c3c3c" stroke-width="0.75"/><rect x="0.4" y="0.4" width="11.4" height="7" fill="#19b0ee" stroke="#3c3c3c" stroke-width="0.75"/><line x1="5.3" y1="0.4" x2="5.3" y2="7.4" stroke="#3c3c3c" stroke-width="0.75"/></svg>
<span style="left:30.00px;top:444.72px;width:400px;text-align:left;font-size:8.6px;line-height:12px;color:#222;transform:scaleX(0.9);transform-origin:left center;font-weight:bold;">Locaux chauffés</span>
<span style="left:87.50px;top:444.72px;width:400px;text-align:center;font-size:8.6px;line-height:12px;color:#222;transform:scaleX(0.91);transform-origin:center center;">87.7</span>
<span style="left:123.90px;top:444.72px;width:400px;text-align:center;font-size:8.6px;line-height:12px;color:#222;transform:scaleX(0.91);transform-origin:center center;">282.8</span>
<span style="left:160.40px;top:444.72px;width:400px;text-align:center;font-size:8.6px;line-height:12px;color:#222;transform:scaleX(0.91);transform-origin:center center;">73.2</span>
<span style="left:202.20px;top:444.72px;width:400px;text-align:center;font-size:8.6px;line-height:12px;color:#222;transform:scaleX(0.91);transform-origin:center center;">0.26</span>
<span style="left:245.90px;top:444.72px;width:400px;text-align:center;font-size:8.6px;line-height:12px;color:#222;transform:scaleX(0.91);transform-origin:center center;">1690</span>
<span style="left:287.00px;top:444.72px;width:400px;text-align:center;font-size:8.6px;line-height:12px;color:#222;transform:scaleX(0.91);transform-origin:center center;">353</span>
<span style="left:329.50px;top:444.72px;width:400px;text-align:center;font-size:8.6px;line-height:12px;color:#222;transform:scaleX(0.91);transform-origin:center center;">443</span>
<span style="left:371.50px;top:444.72px;width:400px;text-align:center;font-size:8.6px;line-height:12px;color:#222;transform:scaleX(0.91);transform-origin:center center;">2487</span>
<span style="left:412.50px;top:444.72px;width:400px;text-align:center;font-size:8.6px;line-height:12px;color:#222;transform:scaleX(0.91);transform-origin:center center;">2487</span>
<span style="left:453.50px;top:444.72px;width:400px;text-align:center;font-size:8.6px;line-height:12px;color:#222;transform:scaleX(0.91);transform-origin:center center;">28.4</span>
<svg style="left:14.90px;top:463.57px" width="12.2" height="11.6" viewBox="0 0 12.2 11.6"><rect x="0.4" y="7.4" width="6.6" height="3.8" fill="#fff" stroke="#3c3c3c" stroke-width="0.75"/><rect x="0.4" y="0.4" width="11.4" height="7" fill="#fff" stroke="#3c3c3c" stroke-width="0.75"/><rect x="0.4" y="0.4" width="4.4" height="7" fill="#19b0ee" stroke="#3c3c3c" stroke-width="0.75"/></svg>
<span style="left:30.00px;top:460.87px;width:400px;text-align:left;font-size:8.6px;line-height:12px;color:#222;transform:scaleX(0.937);transform-origin:left center;">[Locaux chauffés] - Séjour</span>
<span style="left:87.50px;top:460.87px;width:400px;text-align:center;font-size:8.6px;line-height:12px;color:#222;transform:scaleX(0.91);transform-origin:center center;">35.0</span>
<span style="left:123.90px;top:460.87px;width:400px;text-align:center;font-size:8.6px;line-height:12px;color:#222;transform:scaleX(0.91);transform-origin:center center;">103.3</span>
<span style="left:160.40px;top:460.87px;width:400px;text-align:center;font-size:8.6px;line-height:12px;color:#222;transform:scaleX(0.91);transform-origin:center center;">26.4</span>
<span style="left:202.20px;top:460.87px;width:400px;text-align:center;font-size:8.6px;line-height:12px;color:#222;transform:scaleX(0.91);transform-origin:center center;">0.26</span>
<span style="left:245.90px;top:460.87px;width:400px;text-align:center;font-size:8.6px;line-height:12px;color:#222;transform:scaleX(0.91);transform-origin:center center;">612</span>
<span style="left:287.00px;top:460.87px;width:400px;text-align:center;font-size:8.6px;line-height:12px;color:#222;transform:scaleX(0.91);transform-origin:center center;">108</span>
<span style="left:329.50px;top:460.87px;width:400px;text-align:center;font-size:8.6px;line-height:12px;color:#222;transform:scaleX(0.91);transform-origin:center center;">139</span>
<span style="left:371.50px;top:460.87px;width:400px;text-align:center;font-size:8.6px;line-height:12px;color:#222;transform:scaleX(0.91);transform-origin:center center;">859</span>
<span style="left:412.50px;top:460.87px;width:400px;text-align:center;font-size:8.6px;line-height:12px;color:#222;transform:scaleX(0.91);transform-origin:center center;">859</span>
<span style="left:453.50px;top:460.87px;width:400px;text-align:center;font-size:8.6px;line-height:12px;color:#222;transform:scaleX(0.91);transform-origin:center center;">24.5</span>
<svg style="left:14.90px;top:479.72px" width="12.2" height="11.6" viewBox="0 0 12.2 11.6"><rect x="0.4" y="7.4" width="6.6" height="3.8" fill="#fff" stroke="#3c3c3c" stroke-width="0.75"/><rect x="0.4" y="0.4" width="11.4" height="7" fill="#fff" stroke="#3c3c3c" stroke-width="0.75"/><rect x="0.4" y="0.4" width="4.4" height="7" fill="#19b0ee" stroke="#3c3c3c" stroke-width="0.75"/></svg>
<span style="left:30.00px;top:477.02px;width:400px;text-align:left;font-size:8.6px;line-height:12px;color:#222;transform:scaleX(0.937);transform-origin:left center;">[Locaux chauffés] - Cuisine</span>
<span style="left:87.50px;top:477.02px;width:400px;text-align:center;font-size:8.6px;line-height:12px;color:#222;transform:scaleX(0.91);transform-origin:center center;">10.4</span>
<span style="left:123.90px;top:477.02px;width:400px;text-align:center;font-size:8.6px;line-height:12px;color:#222;transform:scaleX(0.91);transform-origin:center center;">39.2</span>
<span style="left:160.40px;top:477.02px;width:400px;text-align:center;font-size:8.6px;line-height:12px;color:#222;transform:scaleX(0.91);transform-origin:center center;">10.8</span>
<span style="left:202.20px;top:477.02px;width:400px;text-align:center;font-size:8.6px;line-height:12px;color:#222;transform:scaleX(0.91);transform-origin:center center;">0.28</span>
<span style="left:245.90px;top:477.02px;width:400px;text-align:center;font-size:8.6px;line-height:12px;color:#222;transform:scaleX(0.91);transform-origin:center center;">249</span>
<span style="left:287.00px;top:477.02px;width:400px;text-align:center;font-size:8.6px;line-height:12px;color:#222;transform:scaleX(0.91);transform-origin:center center;">28</span>
<span style="left:329.50px;top:477.02px;width:400px;text-align:center;font-size:8.6px;line-height:12px;color:#222;transform:scaleX(0.91);transform-origin:center center;">24</span>
<span style="left:371.50px;top:477.02px;width:400px;text-align:center;font-size:8.6px;line-height:12px;color:#222;transform:scaleX(0.91);transform-origin:center center;">301</span>
<span style="left:412.50px;top:477.02px;width:400px;text-align:center;font-size:8.6px;line-height:12px;color:#222;transform:scaleX(0.91);transform-origin:center center;">301</span>
<span style="left:453.50px;top:477.02px;width:400px;text-align:center;font-size:8.6px;line-height:12px;color:#222;transform:scaleX(0.91);transform-origin:center center;">28.9</span>
<svg style="left:14.90px;top:495.87px" width="12.2" height="11.6" viewBox="0 0 12.2 11.6"><rect x="0.4" y="7.4" width="6.6" height="3.8" fill="#fff" stroke="#3c3c3c" stroke-width="0.75"/><rect x="0.4" y="0.4" width="11.4" height="7" fill="#fff" stroke="#3c3c3c" stroke-width="0.75"/><rect x="0.4" y="0.4" width="4.4" height="7" fill="#19b0ee" stroke="#3c3c3c" stroke-width="0.75"/></svg>
<span style="left:30.00px;top:493.17px;width:400px;text-align:left;font-size:8.6px;line-height:12px;color:#222;transform:scaleX(0.937);transform-origin:left center;">[Locaux chauffés] - Chambre 1</span>
<span style="left:87.50px;top:493.17px;width:400px;text-align:center;font-size:8.6px;line-height:12px;color:#222;transform:scaleX(0.91);transform-origin:center center;">12.1</span>
<span style="left:123.90px;top:493.17px;width:400px;text-align:center;font-size:8.6px;line-height:12px;color:#222;transform:scaleX(0.91);transform-origin:center center;">33.7</span>
<span style="left:160.40px;top:493.17px;width:400px;text-align:center;font-size:8.6px;line-height:12px;color:#222;transform:scaleX(0.91);transform-origin:center center;">8.0</span>
<span style="left:202.20px;top:493.17px;width:400px;text-align:center;font-size:8.6px;line-height:12px;color:#222;transform:scaleX(0.91);transform-origin:center center;">0.24</span>
<span style="left:245.90px;top:493.17px;width:400px;text-align:center;font-size:8.6px;line-height:12px;color:#222;transform:scaleX(0.91);transform-origin:center center;">185</span>
<span style="left:287.00px;top:493.17px;width:400px;text-align:center;font-size:8.6px;line-height:12px;color:#222;transform:scaleX(0.91);transform-origin:center center;">50</span>
<span style="left:329.50px;top:493.17px;width:400px;text-align:center;font-size:8.6px;line-height:12px;color:#222;transform:scaleX(0.91);transform-origin:center center;">74</span>
<span style="left:371.50px;top:493.17px;width:400px;text-align:center;font-size:8.6px;line-height:12px;color:#222;transform:scaleX(0.91);transform-origin:center center;">309</span>
<span style="left:412.50px;top:493.17px;width:400px;text-align:center;font-size:8.6px;line-height:12px;color:#222;transform:scaleX(0.91);transform-origin:center center;">309</span>
<span style="left:453.50px;top:493.17px;width:400px;text-align:center;font-size:8.6px;line-height:12px;color:#222;transform:scaleX(0.91);transform-origin:center center;">25.5</span>
<svg style="left:14.90px;top:512.03px" width="12.2" height="11.6" viewBox="0 0 12.2 11.6"><rect x="0.4" y="7.4" width="6.6" height="3.8" fill="#fff" stroke="#3c3c3c" stroke-width="0.75"/><rect x="0.4" y="0.4" width="11.4" height="7" fill="#fff" stroke="#3c3c3c" stroke-width="0.75"/><rect x="0.4" y="0.4" width="4.4" height="7" fill="#19b0ee" stroke="#3c3c3c" stroke-width="0.75"/></svg>
<span style="left:30.00px;top:509.33px;width:400px;text-align:left;font-size:8.6px;line-height:12px;color:#222;transform:scaleX(0.937);transform-origin:left center;">[Locaux chauffés] - Chambre 2</span>
<span style="left:87.50px;top:509.33px;width:400px;text-align:center;font-size:8.6px;line-height:12px;color:#222;transform:scaleX(0.91);transform-origin:center center;">11.6</span>
<span style="left:123.90px;top:509.33px;width:400px;text-align:center;font-size:8.6px;line-height:12px;color:#222;transform:scaleX(0.91);transform-origin:center center;">42.0</span>
<span style="left:160.40px;top:509.33px;width:400px;text-align:center;font-size:8.6px;line-height:12px;color:#222;transform:scaleX(0.91);transform-origin:center center;">10.8</span>
<span style="left:202.20px;top:509.33px;width:400px;text-align:center;font-size:8.6px;line-height:12px;color:#222;transform:scaleX(0.91);transform-origin:center center;">0.26</span>
<span style="left:245.90px;top:509.33px;width:400px;text-align:center;font-size:8.6px;line-height:12px;color:#222;transform:scaleX(0.91);transform-origin:center center;">249</span>
<span style="left:287.00px;top:509.33px;width:400px;text-align:center;font-size:8.6px;line-height:12px;color:#222;transform:scaleX(0.91);transform-origin:center center;">70</span>
<span style="left:329.50px;top:509.33px;width:400px;text-align:center;font-size:8.6px;line-height:12px;color:#222;transform:scaleX(0.91);transform-origin:center center;">91</span>
<span style="left:371.50px;top:509.33px;width:400px;text-align:center;font-size:8.6px;line-height:12px;color:#222;transform:scaleX(0.91);transform-origin:center center;">410</span>
<span style="left:412.50px;top:509.33px;width:400px;text-align:center;font-size:8.6px;line-height:12px;color:#222;transform:scaleX(0.91);transform-origin:center center;">410</span>
<span style="left:453.50px;top:509.33px;width:400px;text-align:center;font-size:8.6px;line-height:12px;color:#222;transform:scaleX(0.91);transform-origin:center center;">35.3</span>
<svg style="left:14.90px;top:528.18px" width="12.2" height="11.6" viewBox="0 0 12.2 11.6"><rect x="0.4" y="7.4" width="6.6" height="3.8" fill="#fff" stroke="#3c3c3c" stroke-width="0.75"/><rect x="0.4" y="0.4" width="11.4" height="7" fill="#fff" stroke="#3c3c3c" stroke-width="0.75"/><rect x="0.4" y="0.4" width="4.4" height="7" fill="#19b0ee" stroke="#3c3c3c" stroke-width="0.75"/></svg>
<span style="left:30.00px;top:525.48px;width:400px;text-align:left;font-size:8.6px;line-height:12px;color:#222;transform:scaleX(0.937);transform-origin:left center;">[Locaux chauffés] - Chambre 3</span>
<span style="left:87.50px;top:525.48px;width:400px;text-align:center;font-size:8.6px;line-height:12px;color:#222;transform:scaleX(0.91);transform-origin:center center;">10.4</span>
<span style="left:123.90px;top:525.48px;width:400px;text-align:center;font-size:8.6px;line-height:12px;color:#222;transform:scaleX(0.91);transform-origin:center center;">39.1</span>
<span style="left:160.40px;top:525.48px;width:400px;text-align:center;font-size:8.6px;line-height:12px;color:#222;transform:scaleX(0.91);transform-origin:center center;">10.4</span>
<span style="left:202.20px;top:525.48px;width:400px;text-align:center;font-size:8.6px;line-height:12px;color:#222;transform:scaleX(0.91);transform-origin:center center;">0.26</span>
<span style="left:245.90px;top:525.48px;width:400px;text-align:center;font-size:8.6px;line-height:12px;color:#222;transform:scaleX(0.91);transform-origin:center center;">240</span>
<span style="left:287.00px;top:525.48px;width:400px;text-align:center;font-size:8.6px;line-height:12px;color:#222;transform:scaleX(0.91);transform-origin:center center;">69</span>
<span style="left:329.50px;top:525.48px;width:400px;text-align:center;font-size:8.6px;line-height:12px;color:#222;transform:scaleX(0.91);transform-origin:center center;">90</span>
<span style="left:371.50px;top:525.48px;width:400px;text-align:center;font-size:8.6px;line-height:12px;color:#222;transform:scaleX(0.91);transform-origin:center center;">399</span>
<span style="left:412.50px;top:525.48px;width:400px;text-align:center;font-size:8.6px;line-height:12px;color:#222;transform:scaleX(0.91);transform-origin:center center;">399</span>
<span style="left:453.50px;top:525.48px;width:400px;text-align:center;font-size:8.6px;line-height:12px;color:#222;transform:scaleX(0.91);transform-origin:center center;">38.4</span>
<svg style="left:14.90px;top:544.33px" width="12.2" height="11.6" viewBox="0 0 12.2 11.6"><rect x="0.4" y="7.4" width="6.6" height="3.8" fill="#fff" stroke="#3c3c3c" stroke-width="0.75"/><rect x="0.4" y="0.4" width="11.4" height="7" fill="#fff" stroke="#3c3c3c" stroke-width="0.75"/><rect x="0.4" y="0.4" width="4.4" height="7" fill="#19b0ee" stroke="#3c3c3c" stroke-width="0.75"/></svg>
<span style="left:30.00px;top:541.62px;width:400px;text-align:left;font-size:8.6px;line-height:12px;color:#222;transform:scaleX(0.937);transform-origin:left center;">[Locaux chauffés] - Salle de bain</span>
<span style="left:87.50px;top:541.62px;width:400px;text-align:center;font-size:8.6px;line-height:12px;color:#222;transform:scaleX(0.91);transform-origin:center center;">6.1</span>
<span style="left:123.90px;top:541.62px;width:400px;text-align:center;font-size:8.6px;line-height:12px;color:#222;transform:scaleX(0.91);transform-origin:center center;">18.7</span>
<span style="left:160.40px;top:541.62px;width:400px;text-align:center;font-size:8.6px;line-height:12px;color:#222;transform:scaleX(0.91);transform-origin:center center;">5.1</span>
<span style="left:202.20px;top:541.62px;width:400px;text-align:center;font-size:8.6px;line-height:12px;color:#222;transform:scaleX(0.91);transform-origin:center center;">0.27</span>
<span style="left:245.90px;top:541.62px;width:400px;text-align:center;font-size:8.6px;line-height:12px;color:#222;transform:scaleX(0.91);transform-origin:center center;">114</span>
<span style="left:287.00px;top:541.62px;width:400px;text-align:center;font-size:8.6px;line-height:12px;color:#222;transform:scaleX(0.91);transform-origin:center center;">18</span>
<span style="left:329.50px;top:541.62px;width:400px;text-align:center;font-size:8.6px;line-height:12px;color:#222;transform:scaleX(0.91);transform-origin:center center;">16</span>
<span style="left:371.50px;top:541.62px;width:400px;text-align:center;font-size:8.6px;line-height:12px;color:#222;transform:scaleX(0.91);transform-origin:center center;">148</span>
<span style="left:412.50px;top:541.62px;width:400px;text-align:center;font-size:8.6px;line-height:12px;color:#222;transform:scaleX(0.91);transform-origin:center center;">148</span>
<span style="left:453.50px;top:541.62px;width:400px;text-align:center;font-size:8.6px;line-height:12px;color:#222;transform:scaleX(0.91);transform-origin:center center;">24.3</span>
<svg style="left:14.90px;top:560.48px" width="12.2" height="11.6" viewBox="0 0 12.2 11.6"><rect x="0.4" y="7.4" width="6.6" height="3.8" fill="#fff" stroke="#3c3c3c" stroke-width="0.75"/><rect x="0.4" y="0.4" width="11.4" height="7" fill="#fff" stroke="#3c3c3c" stroke-width="0.75"/><rect x="0.4" y="0.4" width="4.4" height="7" fill="#19b0ee" stroke="#3c3c3c" stroke-width="0.75"/></svg>
<span style="left:30.00px;top:557.77px;width:400px;text-align:left;font-size:8.6px;line-height:12px;color:#222;transform:scaleX(0.937);transform-origin:left center;">[Locaux chauffés] - WC</span>
<span style="left:87.50px;top:557.77px;width:400px;text-align:center;font-size:8.6px;line-height:12px;color:#222;transform:scaleX(0.91);transform-origin:center center;">2.0</span>
<span style="left:123.90px;top:557.77px;width:400px;text-align:center;font-size:8.6px;line-height:12px;color:#222;transform:scaleX(0.91);transform-origin:center center;">6.7</span>
<span style="left:160.40px;top:557.77px;width:400px;text-align:center;font-size:8.6px;line-height:12px;color:#222;transform:scaleX(0.91);transform-origin:center center;">1.8</span>
<span style="left:202.20px;top:557.77px;width:400px;text-align:center;font-size:8.6px;line-height:12px;color:#222;transform:scaleX(0.91);transform-origin:center center;">0.27</span>
<span style="left:245.90px;top:557.77px;width:400px;text-align:center;font-size:8.6px;line-height:12px;color:#222;transform:scaleX(0.91);transform-origin:center center;">41</span>
<span style="left:287.00px;top:557.77px;width:400px;text-align:center;font-size:8.6px;line-height:12px;color:#222;transform:scaleX(0.91);transform-origin:center center;">10</span>
<span style="left:329.50px;top:557.77px;width:400px;text-align:center;font-size:8.6px;line-height:12px;color:#222;transform:scaleX(0.91);transform-origin:center center;">9</span>
<span style="left:371.50px;top:557.77px;width:400px;text-align:center;font-size:8.6px;line-height:12px;color:#222;transform:scaleX(0.91);transform-origin:center center;">60</span>
<span style="left:412.50px;top:557.77px;width:400px;text-align:center;font-size:8.6px;line-height:12px;color:#222;transform:scaleX(0.91);transform-origin:center center;">60</span>
<span style="left:453.50px;top:557.77px;width:400px;text-align:center;font-size:8.6px;line-height:12px;color:#222;transform:scaleX(0.91);transform-origin:center center;">30.0</span>
<svg style="left:14.90px;top:576.62px" width="12.2" height="11.6" viewBox="0 0 12.2 11.6"><rect x="0.4" y="-0.3" width="11.4" height="7.4" fill="#d4d4d4" stroke="#555" stroke-width="0.8"/><line x1="4.1" y1="0.4" x2="4.1" y2="7.8" stroke="#666" stroke-width="0.7"/><line x1="8" y1="0.4" x2="8" y2="7.8" stroke="#666" stroke-width="0.7"/></svg>
<span style="left:30.00px;top:573.92px;width:400px;text-align:left;font-size:8.6px;line-height:12px;color:#222;transform:scaleX(0.9);transform-origin:left center;font-weight:bold;">Espaces tampon (non chauf.)</span>
<span style="left:87.50px;top:573.92px;width:400px;text-align:center;font-size:8.6px;line-height:12px;color:#222;transform:scaleX(0.91);transform-origin:center center;">148.6</span>
</div>
<div class="win" style="left:566.30px;top:267.30px;width:682.40px;height:454.50px;box-shadow:0 2px 8px rgba(0,0,0,0.13)">
<div style="left:0.00px;top:0.00px;width:682.40px;height:18.30px;background:#e4e4e4;border-bottom:1px solid #d4d4d4;border-top:1px solid #d8d8d8;box-sizing:border-box;"></div>
<div style="left:137.70px;top:2.90px;width:39.00px;height:15.00px;background:#fff;border-radius:1.5px;"></div>
<span style="left:6.70px;top:6.30px;width:400px;text-align:left;font-size:8.0px;line-height:12px;color:#3a3a3a;transform:scaleX(0.915);transform-origin:left center;">Enveloppe - Détails</span>
<span style="left:86.40px;top:6.30px;width:400px;text-align:left;font-size:8.0px;line-height:12px;color:#3a3a3a;transform:scaleX(0.915);transform-origin:left center;">Déperditions</span>
<span style="left:142.90px;top:6.30px;width:400px;text-align:left;font-size:8.0px;line-height:12px;color:#3a3a3a;transform:scaleX(0.915);transform-origin:left center;">Apports</span>
<svg style="left:6.50px;top:24.90px" width="11.19" height="11.56" viewBox="0 0 11.9 12.3"><rect x="1.7" y="0" width="5.6" height="10.7" fill="#74747c"/><rect x="1.7" y="0" width="5.6" height="1.2" fill="#37373b"/><rect x="2.5" y="2.3" width="1.6" height="1.4" fill="#94949c"/><rect x="4.9" y="2.3" width="2.4" height="1" fill="#4a4a50"/><rect x="2.5" y="5.4" width="1.7" height="1.9" fill="#4e4e56"/><rect x="2.5" y="8.3" width="1.7" height="1.2" fill="#5c5c64"/><rect x="7.3" y="3.9" width="3.5" height="6.8" fill="#b0b0b6"/><rect x="7.3" y="3.9" width="3.5" height="0.9" fill="#909096"/><rect x="5.6" y="6.4" width="5.0" height="1.4" fill="#f0f0f0"/><rect x="10" y="4.8" width="0.8" height="1.5" fill="#6a6a70"/><rect x="5.6" y="5.3" width="5.0" height="1.1" fill="#c2c2c8"/><rect x="5.6" y="7.8" width="5.0" height="1.4" fill="#bcbcc2"/><rect x="5.5" y="9.2" width="1.5" height="1.4" fill="#8cbcf0"/><rect x="8" y="9.2" width="1.7" height="1.4" fill="#8cbcf0"/><path d="M0 12.3 L0.7 10.5 L11.2 10.5 L11.9 12.3 Z" fill="#222a1a"/><rect x="0" y="11.85" width="11.9" height="0.45" fill="#b09662"/></svg>
<div style="left:24.50px;top:22.90px;width:653.00px;height:15.60px;background:#8b9aaa;border-radius:7.8px;"></div>
<span style="left:30.70px;top:24.30px;width:400px;text-align:left;font-size:9.2px;line-height:12px;color:#fff;transform:scaleX(0.89);transform-origin:left center;font-weight:bold;">Bâtiment : Maison</span>
<div style="left:671.70px;top:43.20px;width:10.70px;height:412.50px;background:#f0f0f0;"></div>
<div style="left:681.60px;top:0.00px;width:0.80px;height:455.70px;background:#c9c9c9;"></div>
<div style="left:676.00px;top:53.10px;width:1.20px;height:204.60px;background:#666;"></div>
<div style="left:10.50px;top:53.20px;width:650.20px;height:391.80px;background:#fff;border:1px solid #d9d9d9;box-sizing:border-box;"></div>
<div style="left:11.00px;top:53.60px;width:649.30px;height:14.20px;background:#00a1dd;"></div>
<span style="left:130.20px;top:53.70px;width:400px;text-align:center;font-size:11px;line-height:14px;color:#fff;transform:scaleX(0.935);transform-origin:center center;">Apports ASHRAE - Synthèse</span>
<svg style="left:654.00px;top:55.50px" width="5" height="3" viewBox="0 0 5 3"><path d="M0 3L2.5 0L5 3Z" fill="#fff"/></svg>
<div style="left:12.00px;top:69.30px;width:405.30px;height:14.06px;background:#f6f6f6;"></div>
<div style="left:12.00px;top:97.42px;width:405.30px;height:14.06px;background:#f6f6f6;"></div>
<div style="left:12.00px;top:125.54px;width:405.30px;height:14.06px;background:#f6f6f6;"></div>
<div style="left:12.00px;top:153.66px;width:405.30px;height:14.06px;background:#f6f6f6;"></div>
<div style="left:12.00px;top:181.78px;width:405.30px;height:14.06px;background:#f6f6f6;"></div>
<div style="left:12.00px;top:209.90px;width:405.30px;height:14.06px;background:#f6f6f6;"></div>
<div style="left:12.00px;top:238.02px;width:405.30px;height:14.06px;background:#f6f6f6;"></div>
<div style="left:223.70px;top:83.36px;width:2.80px;height:168.72px;background:#fff;"></div>
<div style="left:224.60px;top:83.36px;width:1.00px;height:168.72px;background:#dadada;"></div>
<div style="left:267.00px;top:83.36px;width:2.80px;height:168.72px;background:#fff;"></div>
<div style="left:267.90px;top:83.36px;width:1.00px;height:168.72px;background:#dadada;"></div>
<div style="left:303.00px;top:83.36px;width:2.80px;height:168.72px;background:#fff;"></div>
<div style="left:303.90px;top:83.36px;width:1.00px;height:168.72px;background:#dadada;"></div>
<div style="left:341.20px;top:83.36px;width:2.80px;height:168.72px;background:#fff;"></div>
<div style="left:342.10px;top:83.36px;width:1.00px;height:168.72px;background:#dadada;"></div>
<div style="left:382.80px;top:83.36px;width:2.80px;height:168.72px;background:#fff;"></div>
<div style="left:383.70px;top:83.36px;width:1.00px;height:168.72px;background:#dadada;"></div>
<div style="left:12.00px;top:209.90px;width:405.30px;height:14.06px;background:#f6f6f6;"></div>
<div style="left:10.50px;top:68.80px;width:408.30px;height:183.88px;background:transparent;border:1px solid #cdcdcd;box-sizing:border-box;"></div>
<span style="left:13.80px;top:70.70px;width:400px;text-align:left;font-size:8.4px;line-height:12px;color:#222;transform:scaleX(0.88);transform-origin:left center;font-weight:bold;">Bâtiment - Maison : apports maximum (ASHRAE 2021) - Juin / 15h</span>
<span style="left:47.30px;top:84.70px;width:400px;text-align:center;font-size:8.4px;line-height:12px;color:#222;transform:scaleX(0.85);transform-origin:center center;font-weight:bold;">App. sens.</span>
<span style="left:47.30px;top:98.70px;width:400px;text-align:center;font-size:8.4px;line-height:12px;color:#8a8a8a;transform:scaleX(0.88);transform-origin:center center;">W</span>
<span style="left:86.40px;top:84.70px;width:400px;text-align:center;font-size:8.4px;line-height:12px;color:#222;transform:scaleX(0.85);transform-origin:center center;font-weight:bold;">App. lat.</span>
<span style="left:86.40px;top:98.70px;width:400px;text-align:center;font-size:8.4px;line-height:12px;color:#8a8a8a;transform:scaleX(0.88);transform-origin:center center;">W</span>
<span style="left:123.50px;top:84.70px;width:400px;text-align:center;font-size:8.4px;line-height:12px;color:#222;transform:scaleX(0.85);transform-origin:center center;font-weight:bold;">App. tot.</span>
<span style="left:123.50px;top:98.70px;width:400px;text-align:center;font-size:8.4px;line-height:12px;color:#8a8a8a;transform:scaleX(0.88);transform-origin:center center;">W</span>
<span style="left:162.80px;top:84.70px;width:400px;text-align:center;font-size:8.4px;line-height:12px;color:#222;transform:scaleX(0.85);transform-origin:center center;font-weight:bold;">App. surf.</span>
<span style="left:162.80px;top:98.70px;width:400px;text-align:center;font-size:8.4px;line-height:12px;color:#8a8a8a;transform:scaleX(0.88);transform-origin:center center;">W/m<sup>2</sup></span>
<span style="left:201.40px;top:84.70px;width:400px;text-align:center;font-size:8.4px;line-height:12px;color:#222;transform:scaleX(0.85);transform-origin:center center;font-weight:bold;">% Total</span>
<span style="left:201.40px;top:98.70px;width:400px;text-align:center;font-size:8.4px;line-height:12px;color:#8a8a8a;transform:scaleX(0.88);transform-origin:center center;">%</span>
<span style="left:13.80px;top:112.70px;width:400px;text-align:left;font-size:8.4px;line-height:12px;color:#222;transform:scaleX(0.85);transform-origin:left center;font-weight:bold;">Occupants</span>
<span style="left:47.30px;top:112.70px;width:400px;text-align:center;font-size:8.4px;line-height:12px;color:#222;transform:scaleX(0.88);transform-origin:center center;">194</span>
<span style="left:86.40px;top:112.70px;width:400px;text-align:center;font-size:8.4px;line-height:12px;color:#222;transform:scaleX(0.88);transform-origin:center center;">84</span>
<span style="left:123.50px;top:112.70px;width:400px;text-align:center;font-size:8.4px;line-height:12px;color:#222;transform:scaleX(0.88);transform-origin:center center;">278</span>
<span style="left:162.80px;top:112.70px;width:400px;text-align:center;font-size:8.4px;line-height:12px;color:#222;transform:scaleX(0.88);transform-origin:center center;">3.17</span>
<span style="left:201.40px;top:112.70px;width:400px;text-align:center;font-size:8.4px;line-height:12px;color:#222;transform:scaleX(0.88);transform-origin:center center;">35 %</span>
<span style="left:13.80px;top:126.70px;width:400px;text-align:left;font-size:8.4px;line-height:12px;color:#222;transform:scaleX(0.85);transform-origin:left center;font-weight:bold;">Appareils</span>
<span style="left:47.30px;top:126.70px;width:400px;text-align:center;font-size:8.4px;line-height:12px;color:#222;transform:scaleX(0.88);transform-origin:center center;">489</span>
<span style="left:86.40px;top:126.70px;width:400px;text-align:center;font-size:8.4px;line-height:12px;color:#222;transform:scaleX(0.88);transform-origin:center center;">0</span>
<span style="left:123.50px;top:126.70px;width:400px;text-align:center;font-size:8.4px;line-height:12px;color:#222;transform:scaleX(0.88);transform-origin:center center;">489</span>
<span style="left:162.80px;top:126.70px;width:400px;text-align:center;font-size:8.4px;line-height:12px;color:#222;transform:scaleX(0.88);transform-origin:center center;">5.57</span>
<span style="left:201.40px;top:126.70px;width:400px;text-align:center;font-size:8.4px;line-height:12px;color:#222;transform:scaleX(0.88);transform-origin:center center;">62 %</span>
<span style="left:13.80px;top:140.70px;width:400px;text-align:left;font-size:8.4px;line-height:12px;color:#222;transform:scaleX(0.85);transform-origin:left center;font-weight:bold;">Éclairage</span>
<span style="left:47.30px;top:140.70px;width:400px;text-align:center;font-size:8.4px;line-height:12px;color:#222;transform:scaleX(0.88);transform-origin:center center;">418</span>
<span style="left:123.50px;top:140.70px;width:400px;text-align:center;font-size:8.4px;line-height:12px;color:#222;transform:scaleX(0.88);transform-origin:center center;">418</span>
<span style="left:162.80px;top:140.70px;width:400px;text-align:center;font-size:8.4px;line-height:12px;color:#222;transform:scaleX(0.88);transform-origin:center center;">4.76</span>
<span style="left:201.40px;top:140.70px;width:400px;text-align:center;font-size:8.4px;line-height:12px;color:#222;transform:scaleX(0.88);transform-origin:center center;">53 %</span>
<span style="left:13.80px;top:154.70px;width:400px;text-align:left;font-size:8.4px;line-height:12px;color:#222;transform:scaleX(0.85);transform-origin:left center;font-weight:bold;">Parois (cond.)</span>
<span style="left:47.30px;top:154.70px;width:400px;text-align:center;font-size:8.4px;line-height:12px;color:#222;transform:scaleX(0.88);transform-origin:center center;">-779</span>
<span style="left:123.50px;top:154.70px;width:400px;text-align:center;font-size:8.4px;line-height:12px;color:#222;transform:scaleX(0.88);transform-origin:center center;">-779</span>
<span style="left:162.80px;top:154.70px;width:400px;text-align:center;font-size:8.4px;line-height:12px;color:#222;transform:scaleX(0.88);transform-origin:center center;">-8.88</span>
<span style="left:201.40px;top:154.70px;width:400px;text-align:center;font-size:8.4px;line-height:12px;color:#222;transform:scaleX(0.88);transform-origin:center center;">-98 %</span>
<span style="left:13.80px;top:168.70px;width:400px;text-align:left;font-size:8.4px;line-height:12px;color:#222;transform:scaleX(0.85);transform-origin:left center;font-weight:bold;">App. solaires</span>
<span style="left:47.30px;top:168.70px;width:400px;text-align:center;font-size:8.4px;line-height:12px;color:#222;transform:scaleX(0.88);transform-origin:center center;">531</span>
<span style="left:123.50px;top:168.70px;width:400px;text-align:center;font-size:8.4px;line-height:12px;color:#222;transform:scaleX(0.88);transform-origin:center center;">531</span>
<span style="left:162.80px;top:168.70px;width:400px;text-align:center;font-size:8.4px;line-height:12px;color:#222;transform:scaleX(0.88);transform-origin:center center;">6.06</span>
<span style="left:201.40px;top:168.70px;width:400px;text-align:center;font-size:8.4px;line-height:12px;color:#222;transform:scaleX(0.88);transform-origin:center center;">67 %</span>
<span style="left:13.80px;top:182.70px;width:400px;text-align:left;font-size:8.4px;line-height:12px;color:#222;transform:scaleX(0.85);transform-origin:left center;font-weight:bold;">Ventilation</span>
<span style="left:47.30px;top:182.70px;width:400px;text-align:center;font-size:8.4px;line-height:12px;color:#222;transform:scaleX(0.88);transform-origin:center center;">-69</span>
<span style="left:86.40px;top:182.70px;width:400px;text-align:center;font-size:8.4px;line-height:12px;color:#222;transform:scaleX(0.88);transform-origin:center center;">-76</span>
<span style="left:123.50px;top:182.70px;width:400px;text-align:center;font-size:8.4px;line-height:12px;color:#222;transform:scaleX(0.88);transform-origin:center center;">-145</span>
<span style="left:162.80px;top:182.70px;width:400px;text-align:center;font-size:8.4px;line-height:12px;color:#222;transform:scaleX(0.88);transform-origin:center center;">-1.65</span>
<span style="left:201.40px;top:182.70px;width:400px;text-align:center;font-size:8.4px;line-height:12px;color:#222;transform:scaleX(0.88);transform-origin:center center;">-18 %</span>
<span style="left:13.80px;top:196.70px;width:400px;text-align:left;font-size:8.4px;line-height:12px;color:#222;transform:scaleX(0.85);transform-origin:left center;font-weight:bold;">TOTAL</span>
<span style="left:47.30px;top:196.70px;width:400px;text-align:center;font-size:8.4px;line-height:12px;color:#222;transform:scaleX(0.85);transform-origin:center center;font-weight:bold;">784</span>
<span style="left:86.40px;top:196.70px;width:400px;text-align:center;font-size:8.4px;line-height:12px;color:#222;transform:scaleX(0.85);transform-origin:center center;font-weight:bold;">8</span>
<span style="left:123.50px;top:196.70px;width:400px;text-align:center;font-size:8.4px;line-height:12px;color:#222;transform:scaleX(0.85);transform-origin:center center;font-weight:bold;">792</span>
<span style="left:162.80px;top:196.70px;width:400px;text-align:center;font-size:8.4px;line-height:12px;color:#222;transform:scaleX(0.85);transform-origin:center center;font-weight:bold;">9.03</span>
<span style="left:201.40px;top:196.70px;width:400px;text-align:center;font-size:8.4px;line-height:12px;color:#222;transform:scaleX(0.85);transform-origin:center center;font-weight:bold;">100 %</span>
<span style="left:13.80px;top:224.70px;width:400px;text-align:left;font-size:8.4px;line-height:12px;color:#222;transform:scaleX(0.85);transform-origin:left center;font-weight:bold;">Prérefroidissement</span>
<span style="left:47.30px;top:224.70px;width:400px;text-align:center;font-size:8.4px;line-height:12px;color:#222;transform:scaleX(0.88);transform-origin:center center;">0</span>
<span style="left:86.40px;top:224.70px;width:400px;text-align:center;font-size:8.4px;line-height:12px;color:#222;transform:scaleX(0.88);transform-origin:center center;">0</span>
<span style="left:123.50px;top:224.70px;width:400px;text-align:center;font-size:8.4px;line-height:12px;color:#222;transform:scaleX(0.88);transform-origin:center center;">0</span>
<span style="left:162.80px;top:224.70px;width:400px;text-align:center;font-size:8.4px;line-height:12px;color:#222;transform:scaleX(0.88);transform-origin:center center;">0.00</span>
<span style="left:201.40px;top:224.70px;width:400px;text-align:center;font-size:8.4px;line-height:12px;color:#222;transform:scaleX(0.88);transform-origin:center center;">0 %</span>
<span style="left:13.80px;top:238.70px;width:400px;text-align:left;font-size:8.4px;line-height:12px;color:#222;transform:scaleX(0.85);transform-origin:left center;font-weight:bold;">Charge locaux</span>
<span style="left:47.30px;top:238.70px;width:400px;text-align:center;font-size:8.4px;line-height:12px;color:#222;transform:scaleX(0.85);transform-origin:center center;font-weight:bold;">784</span>
<span style="left:86.40px;top:238.70px;width:400px;text-align:center;font-size:8.4px;line-height:12px;color:#222;transform:scaleX(0.85);transform-origin:center center;font-weight:bold;">8</span>
<span style="left:123.50px;top:238.70px;width:400px;text-align:center;font-size:8.4px;line-height:12px;color:#222;transform:scaleX(0.85);transform-origin:center center;font-weight:bold;">792</span>
<span style="left:162.80px;top:238.70px;width:400px;text-align:center;font-size:8.4px;line-height:12px;color:#222;transform:scaleX(0.85);transform-origin:center center;font-weight:bold;">9.03</span>
<span style="left:201.40px;top:238.70px;width:400px;text-align:center;font-size:8.4px;line-height:12px;color:#222;transform:scaleX(0.85);transform-origin:center center;font-weight:bold;">100 %</span>
<span style="left:349.70px;top:72.50px;width:400px;text-align:center;font-size:8.4px;line-height:12px;color:#222;transform:scaleX(0.912);transform-origin:center center;">Apports max. (W) - Bâtiment - Maison - Juin / 15h</span>
<svg style="left:0;top:0" width="682" height="456"><path d="M583.10 167.30A70.5 70.5 0 0 0 549.62 107.30L533.29 133.77A39.4 39.4 0 0 1 552.00 167.30Z" fill="#178d77" stroke="#178d77" stroke-width="0.5" stroke-linejoin="round"/><path d="M549.62 107.30A70.5 70.5 0 0 0 445.98 144.24L475.37 154.41A39.4 39.4 0 0 1 533.29 133.77Z" fill="#259c55" stroke="#259c55" stroke-width="0.5" stroke-linejoin="round"/><path d="M445.98 144.24A70.5 70.5 0 0 0 486.88 232.94L498.22 203.98A39.4 39.4 0 0 1 475.37 154.41Z" fill="#b8990f" stroke="#b8990f" stroke-width="0.5" stroke-linejoin="round"/><path d="M486.88 232.94A70.5 70.5 0 0 0 583.10 167.30L552.00 167.30A39.4 39.4 0 0 1 498.22 203.98Z" fill="#cf6f21" stroke="#cf6f21" stroke-width="0.5" stroke-linejoin="round"/></svg>
<span style="left:360.24px;top:135.65px;width:400px;text-align:center;font-size:8.4px;line-height:12px;color:#1a1a1a;transform:scaleX(0.88);transform-origin:center center;">278</span>
<span style="left:293.44px;top:110.12px;width:400px;text-align:center;font-size:8.4px;line-height:12px;color:#1a1a1a;transform:scaleX(0.88);transform-origin:center center;">489</span>
<span style="left:261.97px;top:185.24px;width:400px;text-align:center;font-size:8.4px;line-height:12px;color:#1a1a1a;transform:scaleX(0.88);transform-origin:center center;">418</span>
<span style="left:343.32px;top:206.62px;width:400px;text-align:center;font-size:8.4px;line-height:12px;color:#1a1a1a;transform:scaleX(0.88);transform-origin:center center;">531</span>
<div style="left:598.50px;top:144.60px;width:6.00px;height:6.00px;background:#178d77;"></div>
<span style="left:608.90px;top:141.60px;width:400px;text-align:left;font-size:8.4px;line-height:12px;color:#222;transform:scaleX(0.88);transform-origin:left center;">Occup. (278)</span>
<div style="left:598.50px;top:158.17px;width:6.00px;height:6.00px;background:#259c55;"></div>
<span style="left:608.90px;top:155.17px;width:400px;text-align:left;font-size:8.4px;line-height:12px;color:#222;transform:scaleX(0.88);transform-origin:left center;">Equip. (489)</span>
<div style="left:598.50px;top:171.74px;width:6.00px;height:6.00px;background:#b8990f;"></div>
<span style="left:608.90px;top:168.74px;width:400px;text-align:left;font-size:8.4px;line-height:12px;color:#222;transform:scaleX(0.88);transform-origin:left center;">Eclai. (418)</span>
<div style="left:598.50px;top:185.31px;width:6.00px;height:6.00px;background:#cf6f21;"></div>
<span style="left:608.90px;top:182.31px;width:400px;text-align:left;font-size:8.4px;line-height:12px;color:#222;transform:scaleX(0.88);transform-origin:left center;">Solai. (531)</span>
<svg style="left:420.63px;top:231.83px" width="17.53" height="14.33" viewBox="-0.6 -0.6 18.6 15.2"><path d="M5.0 2.1 L5.7 0.7 Q6 0 6.8 0 L12 0 Q12.8 0 13.1 0.7 L13.8 2.1 L15.2 2.1 Q17.4 2.1 17.4 4.3 L17.4 11.8 Q17.4 14 15.2 14 L2.2 14 Q0 14 0 11.8 L0 4.3 Q0 2.1 2.2 2.1 Z" fill="#5f5f5f"/><rect x="1.9" y="3.4" width="1.5" height="1.5" rx="0.3" fill="#fff"/><circle cx="8.9" cy="8.15" r="4.9" fill="#fdf6f2"/><circle cx="8.9" cy="8.15" r="3.55" fill="#0ab2f2"/></svg>
<svg style="left:13.13px;top:426.73px" width="17.53" height="14.33" viewBox="-0.6 -0.6 18.6 15.2"><path d="M5.0 2.1 L5.7 0.7 Q6 0 6.8 0 L12 0 Q12.8 0 13.1 0.7 L13.8 2.1 L15.2 2.1 Q17.4 2.1 17.4 4.3 L17.4 11.8 Q17.4 14 15.2 14 L2.2 14 Q0 14 0 11.8 L0 4.3 Q0 2.1 2.2 2.1 Z" fill="#5f5f5f"/><rect x="1.9" y="3.4" width="1.5" height="1.5" rx="0.3" fill="#fff"/><circle cx="8.9" cy="8.15" r="4.9" fill="#fdf6f2"/><circle cx="8.9" cy="8.15" r="3.55" fill="#0ab2f2"/></svg>
<span style="left:120.10px;top:275.30px;width:400px;text-align:center;font-size:7.6px;line-height:12px;color:#222;transform:scaleX(0.94);transform-origin:center center;font-weight:bold;">Bâtiment - Maison : apports sur la journée du maximum constaté - Juin / 15h</span>
<svg style="left:0;top:0" width="682" height="456"><line x1="82.00" y1="412.44" x2="593.90" y2="412.44" stroke="#cfcfcf" stroke-width="1.6"/><line x1="82.00" y1="395.38" x2="593.90" y2="395.38" stroke="#cfcfcf" stroke-width="1.6"/><line x1="82.00" y1="378.31" x2="593.90" y2="378.31" stroke="#cfcfcf" stroke-width="1.6"/><line x1="82.00" y1="361.25" x2="593.90" y2="361.25" stroke="#cfcfcf" stroke-width="1.6"/><line x1="82.00" y1="344.18" x2="593.90" y2="344.18" stroke="#cfcfcf" stroke-width="1.6"/><line x1="82.00" y1="327.12" x2="593.90" y2="327.12" stroke="#cfcfcf" stroke-width="1.6"/><line x1="82.00" y1="310.05" x2="593.90" y2="310.05" stroke="#cfcfcf" stroke-width="1.6"/><line x1="82.00" y1="292.99" x2="593.90" y2="292.99" stroke="#cfcfcf" stroke-width="1.6"/><line x1="101.89" y1="289.90" x2="101.89" y2="418.80" stroke="#bdbdbd" stroke-width="1.1"/><line x1="123.28" y1="289.90" x2="123.28" y2="418.80" stroke="#bdbdbd" stroke-width="1.1"/><line x1="144.67" y1="289.90" x2="144.67" y2="418.80" stroke="#bdbdbd" stroke-width="1.1"/><line x1="166.07" y1="289.90" x2="166.07" y2="418.80" stroke="#bdbdbd" stroke-width="1.1"/><line x1="187.46" y1="289.90" x2="187.46" y2="418.80" stroke="#bdbdbd" stroke-width="1.1"/><line x1="208.85" y1="289.90" x2="208.85" y2="418.80" stroke="#bdbdbd" stroke-width="1.1"/><line x1="230.24" y1="289.90" x2="230.24" y2="418.80" stroke="#bdbdbd" stroke-width="1.1"/><line x1="251.63" y1="289.90" x2="251.63" y2="418.80" stroke="#bdbdbd" stroke-width="1.1"/><line x1="273.03" y1="289.90" x2="273.03" y2="418.80" stroke="#bdbdbd" stroke-width="1.1"/><line x1="294.42" y1="289.90" x2="294.42" y2="418.80" stroke="#bdbdbd" stroke-width="1.1"/><line x1="315.81" y1="289.90" x2="315.81" y2="418.80" stroke="#bdbdbd" stroke-width="1.1"/><line x1="337.20" y1="289.90" x2="337.20" y2="418.80" stroke="#bdbdbd" stroke-width="1.1"/><line x1="358.59" y1="289.90" x2="358.59" y2="418.80" stroke="#bdbdbd" stroke-width="1.1"/><line x1="379.98" y1="289.90" x2="379.98" y2="418.80" stroke="#bdbdbd" stroke-width="1.1"/><line x1="401.38" y1="289.90" x2="401.38" y2="418.80" stroke="#bdbdbd" stroke-width="1.1"/><line x1="422.77" y1="289.90" x2="422.77" y2="418.80" stroke="#bdbdbd" stroke-width="1.1"/><line x1="444.16" y1="289.90" x2="444.16" y2="418.80" stroke="#bdbdbd" stroke-width="1.1"/><line x1="465.55" y1="289.90" x2="465.55" y2="418.80" stroke="#bdbdbd" stroke-width="1.1"/><line x1="486.94" y1="289.90" x2="486.94" y2="418.80" stroke="#bdbdbd" stroke-width="1.1"/><line x1="508.33" y1="289.90" x2="508.33" y2="418.80" stroke="#bdbdbd" stroke-width="1.1"/><line x1="529.73" y1="289.90" x2="529.73" y2="418.80" stroke="#bdbdbd" stroke-width="1.1"/><line x1="551.12" y1="289.90" x2="551.12" y2="418.80" stroke="#bdbdbd" stroke-width="1.1"/><line x1="572.51" y1="289.90" x2="572.51" y2="418.80" stroke="#bdbdbd" stroke-width="1.1"/><rect x="83.50" y="341.07" width="15.8" height="20.18" fill="#cf6f21"/><rect x="83.50" y="346.23" width="15.8" height="15.02" fill="#b8990f"/><rect x="83.50" y="348.92" width="15.8" height="12.33" fill="#259c55"/><rect x="83.50" y="353.85" width="15.8" height="7.40" fill="#2dd0aa"/><rect x="83.50" y="356.09" width="15.8" height="5.16" fill="#17917b"/><rect x="83.50" y="361.25" width="15.8" height="45.97" fill="#bf4a07"/><rect x="83.50" y="361.25" width="15.8" height="29.82" fill="#da8b15"/><rect x="104.89" y="342.41" width="15.8" height="18.84" fill="#cf6f21"/><rect x="104.89" y="347.35" width="15.8" height="13.90" fill="#b8990f"/><rect x="104.89" y="349.59" width="15.8" height="11.66" fill="#259c55"/><rect x="104.89" y="353.85" width="15.8" height="7.40" fill="#2dd0aa"/><rect x="104.89" y="356.09" width="15.8" height="5.16" fill="#17917b"/><rect x="104.89" y="361.25" width="15.8" height="47.09" fill="#bf4a07"/><rect x="104.89" y="361.25" width="15.8" height="30.50" fill="#da8b15"/><rect x="126.28" y="343.98" width="15.8" height="17.27" fill="#cf6f21"/><rect x="126.28" y="348.47" width="15.8" height="12.78" fill="#b8990f"/><rect x="126.28" y="349.59" width="15.8" height="11.66" fill="#259c55"/><rect x="126.28" y="353.85" width="15.8" height="7.40" fill="#2dd0aa"/><rect x="126.28" y="356.09" width="15.8" height="5.16" fill="#17917b"/><rect x="126.28" y="361.25" width="15.8" height="47.76" fill="#bf4a07"/><rect x="126.28" y="361.25" width="15.8" height="30.50" fill="#da8b15"/><rect x="147.67" y="344.43" width="15.8" height="16.82" fill="#cf6f21"/><rect x="147.67" y="348.92" width="15.8" height="12.33" fill="#b8990f"/><rect x="147.67" y="349.59" width="15.8" height="11.66" fill="#259c55"/><rect x="147.67" y="353.85" width="15.8" height="7.40" fill="#2dd0aa"/><rect x="147.67" y="356.09" width="15.8" height="5.16" fill="#17917b"/><rect x="147.67" y="361.25" width="15.8" height="48.43" fill="#bf4a07"/><rect x="147.67" y="361.25" width="15.8" height="31.17" fill="#da8b15"/><rect x="169.06" y="346.00" width="15.8" height="15.25" fill="#cf6f21"/><rect x="169.06" y="348.92" width="15.8" height="12.33" fill="#b8990f"/><rect x="169.06" y="349.59" width="15.8" height="11.66" fill="#259c55"/><rect x="169.06" y="353.85" width="15.8" height="7.40" fill="#2dd0aa"/><rect x="169.06" y="356.09" width="15.8" height="5.16" fill="#17917b"/><rect x="169.06" y="361.25" width="15.8" height="49.78" fill="#bf4a07"/><rect x="169.06" y="361.25" width="15.8" height="31.84" fill="#da8b15"/><rect x="190.45" y="343.09" width="15.8" height="18.16" fill="#cf6f21"/><rect x="190.45" y="349.37" width="15.8" height="11.88" fill="#b8990f"/><rect x="190.45" y="350.26" width="15.8" height="10.99" fill="#259c55"/><rect x="190.45" y="353.85" width="15.8" height="7.40" fill="#2dd0aa"/><rect x="190.45" y="356.09" width="15.8" height="5.16" fill="#17917b"/><rect x="190.45" y="361.25" width="15.8" height="50.68" fill="#bf4a07"/><rect x="190.45" y="361.25" width="15.8" height="31.84" fill="#da8b15"/><rect x="211.85" y="317.08" width="15.8" height="44.17" fill="#cf6f21"/><rect x="211.85" y="324.70" width="15.8" height="36.55" fill="#b8990f"/><rect x="211.85" y="336.14" width="15.8" height="25.11" fill="#259c55"/><rect x="211.85" y="351.83" width="15.8" height="9.42" fill="#2dd0aa"/><rect x="211.85" y="354.52" width="15.8" height="6.73" fill="#17917b"/><rect x="211.85" y="361.25" width="15.8" height="50.68" fill="#bf4a07"/><rect x="211.85" y="361.25" width="15.8" height="32.29" fill="#da8b15"/><rect x="233.24" y="314.61" width="15.8" height="46.64" fill="#cf6f21"/><rect x="233.24" y="323.13" width="15.8" height="38.12" fill="#b8990f"/><rect x="233.24" y="335.46" width="15.8" height="25.79" fill="#259c55"/><rect x="233.24" y="351.83" width="15.8" height="9.42" fill="#2dd0aa"/><rect x="233.24" y="354.52" width="15.8" height="6.73" fill="#17917b"/><rect x="233.24" y="361.25" width="15.8" height="49.11" fill="#bf4a07"/><rect x="233.24" y="361.25" width="15.8" height="32.29" fill="#da8b15"/><rect x="254.63" y="313.26" width="15.8" height="47.99" fill="#cf6f21"/><rect x="254.63" y="322.01" width="15.8" height="39.24" fill="#b8990f"/><rect x="254.63" y="335.46" width="15.8" height="25.79" fill="#259c55"/><rect x="254.63" y="351.83" width="15.8" height="9.42" fill="#2dd0aa"/><rect x="254.63" y="354.52" width="15.8" height="6.73" fill="#17917b"/><rect x="254.63" y="361.25" width="15.8" height="45.97" fill="#bf4a07"/><rect x="254.63" y="361.25" width="15.8" height="31.17" fill="#da8b15"/><rect x="276.02" y="310.80" width="15.8" height="50.45" fill="#cf6f21"/><rect x="276.02" y="321.34" width="15.8" height="39.91" fill="#b8990f"/><rect x="276.02" y="335.01" width="15.8" height="26.24" fill="#259c55"/><rect x="276.02" y="351.83" width="15.8" height="9.42" fill="#2dd0aa"/><rect x="276.02" y="354.52" width="15.8" height="6.73" fill="#17917b"/><rect x="276.02" y="361.25" width="15.8" height="41.93" fill="#bf4a07"/><rect x="276.02" y="361.25" width="15.8" height="30.27" fill="#da8b15"/><rect x="297.41" y="308.11" width="15.8" height="53.14" fill="#cf6f21"/><rect x="297.41" y="321.34" width="15.8" height="39.91" fill="#b8990f"/><rect x="297.41" y="335.01" width="15.8" height="26.24" fill="#259c55"/><rect x="297.41" y="351.83" width="15.8" height="9.42" fill="#2dd0aa"/><rect x="297.41" y="354.52" width="15.8" height="6.73" fill="#17917b"/><rect x="297.41" y="361.25" width="15.8" height="38.79" fill="#bf4a07"/><rect x="297.41" y="361.25" width="15.8" height="28.93" fill="#da8b15"/><rect x="318.80" y="305.86" width="15.8" height="55.39" fill="#cf6f21"/><rect x="318.80" y="320.66" width="15.8" height="40.59" fill="#b8990f"/><rect x="318.80" y="335.01" width="15.8" height="26.24" fill="#259c55"/><rect x="318.80" y="351.83" width="15.8" height="9.42" fill="#2dd0aa"/><rect x="318.80" y="354.52" width="15.8" height="6.73" fill="#17917b"/><rect x="318.80" y="361.25" width="15.8" height="35.65" fill="#bf4a07"/><rect x="318.80" y="361.25" width="15.8" height="27.81" fill="#da8b15"/><rect x="340.20" y="303.85" width="15.8" height="57.40" fill="#cf6f21"/><rect x="340.20" y="320.44" width="15.8" height="40.81" fill="#b8990f"/><rect x="340.20" y="334.79" width="15.8" height="26.46" fill="#259c55"/><rect x="340.20" y="351.83" width="15.8" height="9.42" fill="#2dd0aa"/><rect x="340.20" y="354.52" width="15.8" height="6.73" fill="#17917b"/><rect x="340.20" y="361.25" width="15.8" height="33.64" fill="#bf4a07"/><rect x="340.20" y="361.25" width="15.8" height="27.13" fill="#da8b15"/><rect x="361.59" y="302.50" width="15.8" height="58.75" fill="#cf6f21"/><rect x="361.59" y="319.99" width="15.8" height="41.26" fill="#b8990f"/><rect x="361.59" y="334.79" width="15.8" height="26.46" fill="#259c55"/><rect x="361.59" y="351.83" width="15.8" height="9.42" fill="#2dd0aa"/><rect x="361.59" y="354.52" width="15.8" height="6.73" fill="#17917b"/><rect x="361.59" y="361.25" width="15.8" height="31.84" fill="#bf4a07"/><rect x="361.59" y="361.25" width="15.8" height="26.68" fill="#da8b15"/><rect x="382.98" y="302.50" width="15.8" height="58.75" fill="#cf6f21"/><rect x="382.98" y="319.99" width="15.8" height="41.26" fill="#b8990f"/><rect x="382.98" y="334.79" width="15.8" height="26.46" fill="#259c55"/><rect x="382.98" y="351.83" width="15.8" height="9.42" fill="#2dd0aa"/><rect x="382.98" y="354.52" width="15.8" height="6.73" fill="#17917b"/><rect x="382.98" y="361.25" width="15.8" height="30.72" fill="#bf4a07"/><rect x="382.98" y="361.25" width="15.8" height="26.46" fill="#da8b15"/><rect x="404.37" y="303.17" width="15.8" height="58.08" fill="#cf6f21"/><rect x="404.37" y="319.99" width="15.8" height="41.26" fill="#b8990f"/><rect x="404.37" y="334.34" width="15.8" height="26.91" fill="#259c55"/><rect x="404.37" y="351.83" width="15.8" height="9.42" fill="#2dd0aa"/><rect x="404.37" y="354.52" width="15.8" height="6.73" fill="#17917b"/><rect x="404.37" y="361.25" width="15.8" height="30.72" fill="#bf4a07"/><rect x="404.37" y="361.25" width="15.8" height="25.79" fill="#da8b15"/><rect x="425.76" y="304.52" width="15.8" height="56.73" fill="#cf6f21"/><rect x="425.76" y="319.99" width="15.8" height="41.26" fill="#b8990f"/><rect x="425.76" y="334.34" width="15.8" height="26.91" fill="#259c55"/><rect x="425.76" y="351.83" width="15.8" height="9.42" fill="#2dd0aa"/><rect x="425.76" y="354.52" width="15.8" height="6.73" fill="#17917b"/><rect x="425.76" y="361.25" width="15.8" height="31.39" fill="#bf4a07"/><rect x="425.76" y="361.25" width="15.8" height="25.79" fill="#da8b15"/><rect x="447.15" y="305.19" width="15.8" height="56.06" fill="#cf6f21"/><rect x="447.15" y="319.99" width="15.8" height="41.26" fill="#b8990f"/><rect x="447.15" y="334.34" width="15.8" height="26.91" fill="#259c55"/><rect x="447.15" y="351.83" width="15.8" height="9.42" fill="#2dd0aa"/><rect x="447.15" y="354.52" width="15.8" height="6.73" fill="#17917b"/><rect x="447.15" y="361.25" width="15.8" height="33.19" fill="#bf4a07"/><rect x="447.15" y="361.25" width="15.8" height="26.68" fill="#da8b15"/><rect x="468.55" y="305.19" width="15.8" height="56.06" fill="#cf6f21"/><rect x="468.55" y="319.99" width="15.8" height="41.26" fill="#b8990f"/><rect x="468.55" y="334.34" width="15.8" height="26.91" fill="#259c55"/><rect x="468.55" y="351.83" width="15.8" height="9.42" fill="#2dd0aa"/><rect x="468.55" y="354.52" width="15.8" height="6.73" fill="#17917b"/><rect x="468.55" y="361.25" width="15.8" height="34.31" fill="#bf4a07"/><rect x="468.55" y="361.25" width="15.8" height="26.68" fill="#da8b15"/><rect x="489.94" y="305.86" width="15.8" height="55.39" fill="#cf6f21"/><rect x="489.94" y="319.32" width="15.8" height="41.93" fill="#b8990f"/><rect x="489.94" y="334.34" width="15.8" height="26.91" fill="#259c55"/><rect x="489.94" y="351.83" width="15.8" height="9.42" fill="#2dd0aa"/><rect x="489.94" y="354.52" width="15.8" height="6.73" fill="#17917b"/><rect x="489.94" y="361.25" width="15.8" height="37.67" fill="#bf4a07"/><rect x="489.94" y="361.25" width="15.8" height="27.81" fill="#da8b15"/><rect x="511.33" y="309.90" width="15.8" height="51.35" fill="#cf6f21"/><rect x="511.33" y="319.32" width="15.8" height="41.93" fill="#b8990f"/><rect x="511.33" y="334.34" width="15.8" height="26.91" fill="#259c55"/><rect x="511.33" y="351.83" width="15.8" height="9.42" fill="#2dd0aa"/><rect x="511.33" y="354.52" width="15.8" height="6.73" fill="#17917b"/><rect x="511.33" y="361.25" width="15.8" height="39.69" fill="#bf4a07"/><rect x="511.33" y="361.25" width="15.8" height="27.81" fill="#da8b15"/><rect x="532.72" y="311.69" width="15.8" height="49.56" fill="#cf6f21"/><rect x="532.72" y="319.32" width="15.8" height="41.93" fill="#b8990f"/><rect x="532.72" y="334.34" width="15.8" height="26.91" fill="#259c55"/><rect x="532.72" y="351.83" width="15.8" height="9.42" fill="#2dd0aa"/><rect x="532.72" y="354.52" width="15.8" height="6.73" fill="#17917b"/><rect x="532.72" y="361.25" width="15.8" height="41.48" fill="#bf4a07"/><rect x="532.72" y="361.25" width="15.8" height="28.25" fill="#da8b15"/><rect x="554.11" y="337.26" width="15.8" height="23.99" fill="#cf6f21"/><rect x="554.11" y="343.98" width="15.8" height="17.27" fill="#b8990f"/><rect x="554.11" y="347.35" width="15.8" height="13.90" fill="#259c55"/><rect x="554.11" y="353.40" width="15.8" height="7.85" fill="#2dd0aa"/><rect x="554.11" y="355.20" width="15.8" height="6.05" fill="#17917b"/><rect x="554.11" y="361.25" width="15.8" height="42.83" fill="#bf4a07"/><rect x="554.11" y="361.25" width="15.8" height="28.93" fill="#da8b15"/><rect x="575.50" y="339.50" width="15.8" height="21.75" fill="#cf6f21"/><rect x="575.50" y="345.55" width="15.8" height="15.70" fill="#b8990f"/><rect x="575.50" y="348.92" width="15.8" height="12.33" fill="#259c55"/><rect x="575.50" y="353.40" width="15.8" height="7.85" fill="#2dd0aa"/><rect x="575.50" y="355.20" width="15.8" height="6.05" fill="#17917b"/><rect x="575.50" y="361.25" width="15.8" height="43.95" fill="#bf4a07"/><rect x="575.50" y="361.25" width="15.8" height="28.93" fill="#da8b15"/><line x1="80.50" y1="289.90" x2="80.50" y2="419.60" stroke="#999" stroke-width="1.5"/><line x1="79.80" y1="418.80" x2="593.90" y2="418.80" stroke="#999" stroke-width="1.7"/><line x1="78.50" y1="412.44" x2="80.50" y2="412.44" stroke="#9a9a9a" stroke-width="0.9"/><line x1="78.50" y1="395.38" x2="80.50" y2="395.38" stroke="#9a9a9a" stroke-width="0.9"/><line x1="78.50" y1="378.31" x2="80.50" y2="378.31" stroke="#9a9a9a" stroke-width="0.9"/><line x1="78.50" y1="361.25" x2="80.50" y2="361.25" stroke="#9a9a9a" stroke-width="0.9"/><line x1="78.50" y1="344.18" x2="80.50" y2="344.18" stroke="#9a9a9a" stroke-width="0.9"/><line x1="78.50" y1="327.12" x2="80.50" y2="327.12" stroke="#9a9a9a" stroke-width="0.9"/><line x1="78.50" y1="310.05" x2="80.50" y2="310.05" stroke="#9a9a9a" stroke-width="0.9"/><line x1="78.50" y1="292.99" x2="80.50" y2="292.99" stroke="#9a9a9a" stroke-width="0.9"/></svg>
<span style="left:-322.90px;top:407.05px;width:400px;text-align:right;font-size:7.8px;line-height:12px;color:#2e2e2e;transform:scaleX(0.95);transform-origin:right center;">-1 500</span>
<span style="left:-322.90px;top:389.98px;width:400px;text-align:right;font-size:7.8px;line-height:12px;color:#2e2e2e;transform:scaleX(0.95);transform-origin:right center;">-1 000</span>
<span style="left:-322.90px;top:372.92px;width:400px;text-align:right;font-size:7.8px;line-height:12px;color:#2e2e2e;transform:scaleX(0.95);transform-origin:right center;">-500</span>
<span style="left:-322.90px;top:355.85px;width:400px;text-align:right;font-size:7.8px;line-height:12px;color:#2e2e2e;transform:scaleX(0.95);transform-origin:right center;">0</span>
<span style="left:-322.90px;top:338.78px;width:400px;text-align:right;font-size:7.8px;line-height:12px;color:#2e2e2e;transform:scaleX(0.95);transform-origin:right center;">500</span>
<span style="left:-322.90px;top:321.72px;width:400px;text-align:right;font-size:7.8px;line-height:12px;color:#2e2e2e;transform:scaleX(0.95);transform-origin:right center;">1 000</span>
<span style="left:-322.90px;top:304.65px;width:400px;text-align:right;font-size:7.8px;line-height:12px;color:#2e2e2e;transform:scaleX(0.95);transform-origin:right center;">1 500</span>
<span style="left:-322.90px;top:287.59px;width:400px;text-align:right;font-size:7.8px;line-height:12px;color:#2e2e2e;transform:scaleX(0.95);transform-origin:right center;">2 000</span>
<span style="left:-108.80px;top:418.80px;width:400px;text-align:center;font-size:7.8px;line-height:12px;color:#383838;transform:scaleX(0.95);transform-origin:center center;">1h</span>
<span style="left:-87.41px;top:418.80px;width:400px;text-align:center;font-size:7.8px;line-height:12px;color:#383838;transform:scaleX(0.95);transform-origin:center center;">2h</span>
<span style="left:-66.02px;top:418.80px;width:400px;text-align:center;font-size:7.8px;line-height:12px;color:#383838;transform:scaleX(0.95);transform-origin:center center;">3h</span>
<span style="left:-44.63px;top:418.80px;width:400px;text-align:center;font-size:7.8px;line-height:12px;color:#383838;transform:scaleX(0.95);transform-origin:center center;">4h</span>
<span style="left:-23.24px;top:418.80px;width:400px;text-align:center;font-size:7.8px;line-height:12px;color:#383838;transform:scaleX(0.95);transform-origin:center center;">5h</span>
<span style="left:-1.85px;top:418.80px;width:400px;text-align:center;font-size:7.8px;line-height:12px;color:#383838;transform:scaleX(0.95);transform-origin:center center;">6h</span>
<span style="left:19.55px;top:418.80px;width:400px;text-align:center;font-size:7.8px;line-height:12px;color:#383838;transform:scaleX(0.95);transform-origin:center center;">7h</span>
<span style="left:40.94px;top:418.80px;width:400px;text-align:center;font-size:7.8px;line-height:12px;color:#383838;transform:scaleX(0.95);transform-origin:center center;">8h</span>
<span style="left:62.33px;top:418.80px;width:400px;text-align:center;font-size:7.8px;line-height:12px;color:#383838;transform:scaleX(0.95);transform-origin:center center;">9h</span>
<span style="left:83.72px;top:418.80px;width:400px;text-align:center;font-size:7.8px;line-height:12px;color:#383838;transform:scaleX(0.95);transform-origin:center center;">10h</span>
<span style="left:105.11px;top:418.80px;width:400px;text-align:center;font-size:7.8px;line-height:12px;color:#383838;transform:scaleX(0.95);transform-origin:center center;">11h</span>
<span style="left:126.50px;top:418.80px;width:400px;text-align:center;font-size:7.8px;line-height:12px;color:#383838;transform:scaleX(0.95);transform-origin:center center;">12h</span>
<span style="left:147.90px;top:418.80px;width:400px;text-align:center;font-size:7.8px;line-height:12px;color:#383838;transform:scaleX(0.95);transform-origin:center center;">13h</span>
<span style="left:169.29px;top:418.80px;width:400px;text-align:center;font-size:7.8px;line-height:12px;color:#383838;transform:scaleX(0.95);transform-origin:center center;">14h</span>
<span style="left:190.68px;top:418.80px;width:400px;text-align:center;font-size:7.8px;line-height:12px;color:#383838;transform:scaleX(0.95);transform-origin:center center;">15h</span>
<span style="left:212.07px;top:418.80px;width:400px;text-align:center;font-size:7.8px;line-height:12px;color:#383838;transform:scaleX(0.95);transform-origin:center center;">16h</span>
<span style="left:233.46px;top:418.80px;width:400px;text-align:center;font-size:7.8px;line-height:12px;color:#383838;transform:scaleX(0.95);transform-origin:center center;">17h</span>
<span style="left:254.85px;top:418.80px;width:400px;text-align:center;font-size:7.8px;line-height:12px;color:#383838;transform:scaleX(0.95);transform-origin:center center;">18h</span>
<span style="left:276.25px;top:418.80px;width:400px;text-align:center;font-size:7.8px;line-height:12px;color:#383838;transform:scaleX(0.95);transform-origin:center center;">19h</span>
<span style="left:297.64px;top:418.80px;width:400px;text-align:center;font-size:7.8px;line-height:12px;color:#383838;transform:scaleX(0.95);transform-origin:center center;">20h</span>
<span style="left:319.03px;top:418.80px;width:400px;text-align:center;font-size:7.8px;line-height:12px;color:#383838;transform:scaleX(0.95);transform-origin:center center;">21h</span>
<span style="left:340.42px;top:418.80px;width:400px;text-align:center;font-size:7.8px;line-height:12px;color:#383838;transform:scaleX(0.95);transform-origin:center center;">22h</span>
<span style="left:361.81px;top:418.80px;width:400px;text-align:center;font-size:7.8px;line-height:12px;color:#383838;transform:scaleX(0.95);transform-origin:center center;">23h</span>
<span style="left:383.20px;top:418.80px;width:400px;text-align:center;font-size:7.8px;line-height:12px;color:#383838;transform:scaleX(0.95);transform-origin:center center;">24h</span>
<span style="left:136.80px;top:426.90px;width:400px;text-align:center;font-size:7.7px;line-height:12px;color:#222;transform:scaleX(0.94);transform-origin:center center;font-weight:bold;">Heure légale du jour</span>
<span style="left:-48.70px;top:347.70px;width:200px;text-align:center;font-size:7.7px;line-height:12px;color:#333;transform:rotate(-90deg) scaleX(0.95);transform-origin:center center">Apports (W)</span>
<div style="left:129.20px;top:292.80px;width:5.40px;height:5.40px;background:#bf4a07;"></div>
<span style="left:136.30px;top:289.60px;width:400px;text-align:left;font-size:7.6px;line-height:12px;color:#bf4a07;transform:scaleX(0.92);transform-origin:left center;font-weight:bold;">Ventilation</span>
<div style="left:179.10px;top:292.80px;width:5.40px;height:5.40px;background:#cf6f21;"></div>
<span style="left:186.00px;top:289.60px;width:400px;text-align:left;font-size:7.6px;line-height:12px;color:#cf6f21;transform:scaleX(0.92);transform-origin:left center;font-weight:bold;">App.solaires</span>
<div style="left:232.90px;top:292.80px;width:5.40px;height:5.40px;background:#da8b15;"></div>
<span style="left:240.00px;top:289.60px;width:400px;text-align:left;font-size:7.6px;line-height:12px;color:#da8b15;transform:scaleX(0.92);transform-origin:left center;font-weight:bold;">Parois (cond.)</span>
<div style="left:292.20px;top:292.80px;width:5.40px;height:5.40px;background:#b8990f;"></div>
<span style="left:298.60px;top:289.60px;width:400px;text-align:left;font-size:7.6px;line-height:12px;color:#b8990f;transform:scaleX(0.92);transform-origin:left center;font-weight:bold;">Éclairage</span>
<div style="left:334.50px;top:292.80px;width:5.40px;height:5.40px;background:#2fc062;"></div>
<span style="left:341.70px;top:289.60px;width:400px;text-align:left;font-size:7.6px;line-height:12px;color:#2fc062;transform:scaleX(0.92);transform-origin:left center;font-weight:bold;">App.(lat.)</span>
<div style="left:378.70px;top:292.80px;width:5.40px;height:5.40px;background:#259c55;"></div>
<span style="left:385.90px;top:289.60px;width:400px;text-align:left;font-size:7.6px;line-height:12px;color:#259c55;transform:scaleX(0.92);transform-origin:left center;font-weight:bold;">App.(sens.)</span>
<div style="left:429.60px;top:292.80px;width:5.40px;height:5.40px;background:#2dd0aa;"></div>
<span style="left:436.70px;top:289.60px;width:400px;text-align:left;font-size:7.6px;line-height:12px;color:#2dd0aa;transform:scaleX(0.87);transform-origin:left center;font-weight:bold;">Occ.(lat.)</span>
<div style="left:471.50px;top:292.80px;width:5.40px;height:5.40px;background:#17917b;"></div>
<span style="left:478.30px;top:289.60px;width:400px;text-align:left;font-size:7.6px;line-height:12px;color:#17917b;transform:scaleX(0.87);transform-origin:left center;font-weight:bold;">Occ.(sens.)</span>
</div>
</body></html>
